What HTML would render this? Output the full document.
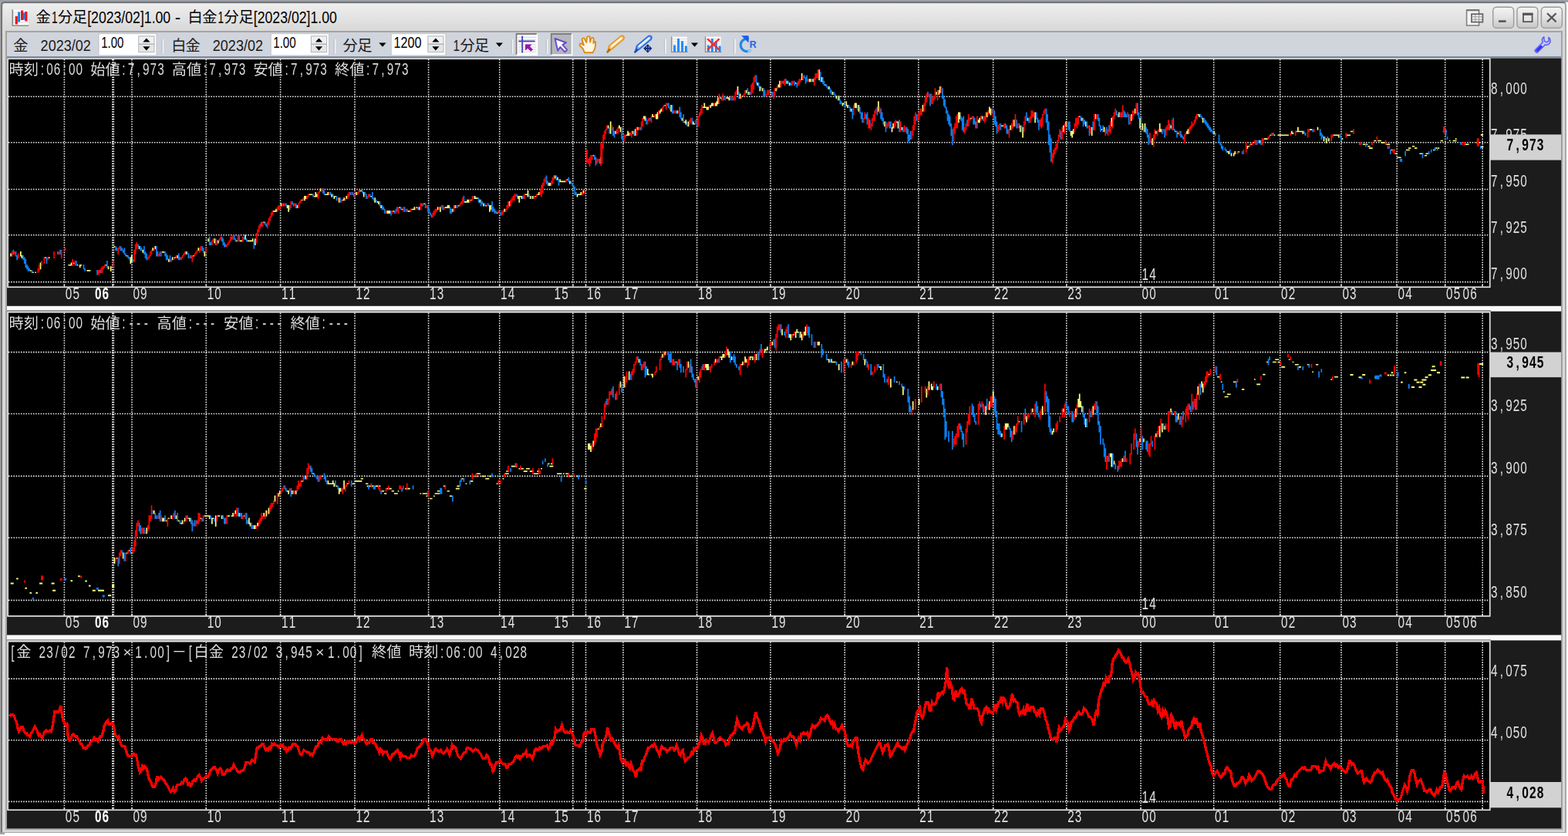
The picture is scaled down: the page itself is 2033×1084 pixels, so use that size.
<!DOCTYPE html>
<html lang="ja"><head><meta charset="utf-8"><title>金1分足[2023/02]1.00 - 白金1分足[2023/02]1.00</title>
<style>
html,body{margin:0;padding:0;background:#fff;}
body{width:2033px;height:1084px;overflow:hidden;position:relative;font-family:"Liberation Sans",sans-serif;}
.abs{position:absolute;}
#shadow{left:0;top:0;width:6px;height:1082px;background:#a8a8a8;}
#topstrip{left:0;top:0;width:2033px;height:3px;background:linear-gradient(#989ea9,#a2a4a8);}
#win{left:1.3px;top:2.4px;width:2025.3px;height:1074.8px;border-style:solid;border-width:2.2px 2.2px 1.8px 2.2px;border-color:#747474 #a8a8a8 #a8a8a8 #747474;border-radius:4.5px 4.5px 0 0;background:#d8d8d8;}
#titlebar{left:3.6px;top:4.8px;width:2025.4px;height:35.4px;border-radius:3px 3px 0 0;background:linear-gradient(#eeeeee,#e4e4e4 45%,#d8d8d8);}
#inner{left:7.2px;top:40.2px;width:2019px;height:1035.8px;background:#a4a4a4;}
#toolbar{left:8.8px;top:41.6px;width:2015.6px;height:31.4px;background:#d0d4dc;}
#tbline{left:8.8px;top:73px;width:2015.6px;height:1.6px;background:#7d8ca4;}
#client{left:8.8px;top:74.6px;width:2015.6px;height:999.8px;background:#fafafa;}
.gapline{left:8.8px;width:1923.8px;height:1.6px;background:#9a9a9a;}
svg{position:absolute;left:0;top:0;}
.cjk{font-family:"Liberation Sans","Noto Sans CJK JP",sans-serif;font-size:19.2px;}
</style></head><body>
<div class="abs" id="shadow"></div>
<div class="abs" id="topstrip"></div>
<div class="abs" id="win"></div>
<div class="abs" id="titlebar"></div>
<div class="abs" id="inner"></div>
<div class="abs" id="toolbar"></div>
<div class="abs" id="tbline"></div>
<div class="abs" id="client"></div>
<div class="abs gapline" style="top:402.2px"></div>
<div class="abs gapline" style="top:828.8px"></div>
<svg width="2033" height="1084" viewBox="0 0 2033 1084">
<defs><linearGradient id="bg" x1="0" y1="0" x2="0" y2="1"><stop offset="0" stop-color="#f4f4f4"/><stop offset="0.5" stop-color="#e2e2e2"/><stop offset="1" stop-color="#c6c6c6"/></linearGradient>
<filter id="soft" x="0" y="0" width="2033" height="1084" filterUnits="userSpaceOnUse"><feGaussianBlur stdDeviation="0.5"/></filter></defs>
<g id="charts" filter="url(#soft)"><rect x="9" y="75.4" width="2015.2" height="321.4" fill="#1a1a1a"/><rect x="9.2" y="75.4" width="1923.4" height="297.7" fill="#e4e4e4"/><rect x="11.0" y="77.0" width="1920.0" height="294.4" fill="#000"/><path d="M11.0 125.3H1931.0M11.0 184.7H1931.0M11.0 245.5H1931.0M11.0 304.8H1931.0M11.0 365.6H1931.0" stroke="#e6e6e6" stroke-width="1.6" stroke-dasharray="1.6 1.6" fill="none"/><path d="M83.4 77.0V371.4M145.8 77.0V371.4M147.4 77.0V371.4M171.0 77.0V371.4M267.3 77.0V371.4M363.6 77.0V371.4M460.0 77.0V371.4M555.6 77.0V371.4M647.7 77.0V371.4M742.8 77.0V371.4M759.5 77.0V371.4M808.0 77.0V371.4M903.6 77.0V371.4M999.0 77.0V371.4M1095.3 77.0V371.4M1190.9 77.0V371.4M1287.7 77.0V371.4M1382.8 77.0V371.4M1479.1 77.0V371.4M1573.7 77.0V371.4M1659.7 77.0V371.4M1739.0 77.0V371.4M1811.2 77.0V371.4M1873.7 77.0V371.4M1922.2 77.0V371.4" stroke="#e6e6e6" stroke-width="1.6" stroke-dasharray="1.6 1.6" fill="none"/><path d="M83.4 369.2v2.4M146.3 369.2v2.4M171.0 369.2v2.4M267.3 369.2v2.4M363.6 369.2v2.4M460.0 369.2v2.4M555.6 369.2v2.4M647.7 369.2v2.4M742.8 369.2v2.4M759.5 369.2v2.4M808.0 369.2v2.4M903.6 369.2v2.4M999.0 369.2v2.4M1095.3 369.2v2.4M1190.9 369.2v2.4M1287.7 369.2v2.4M1382.8 369.2v2.4M1479.1 369.2v2.4M1573.7 369.2v2.4M1659.7 369.2v2.4M1739.0 369.2v2.4M1811.2 369.2v2.4M1873.7 369.2v2.4M1922.2 369.2v2.4" stroke="#e4e4e4" stroke-width="1.6" fill="none"/><rect x="9" y="403.7" width="2015.2" height="419.7" fill="#1a1a1a"/><rect x="9.2" y="403.7" width="1923.4" height="396.0" fill="#e4e4e4"/><rect x="11.0" y="405.6" width="1920.0" height="392.4" fill="#000"/><path d="M11.0 456.6H1931.0M11.0 536.5H1931.0M11.0 617.4H1931.0M11.0 697.3H1931.0M11.0 778.4H1931.0" stroke="#e6e6e6" stroke-width="1.6" stroke-dasharray="1.6 1.6" fill="none"/><path d="M83.4 405.6V798.0M145.8 405.6V798.0M147.4 405.6V798.0M171.0 405.6V798.0M267.3 405.6V798.0M363.6 405.6V798.0M460.0 405.6V798.0M555.6 405.6V798.0M647.7 405.6V798.0M742.8 405.6V798.0M759.5 405.6V798.0M808.0 405.6V798.0M903.6 405.6V798.0M999.0 405.6V798.0M1095.3 405.6V798.0M1190.9 405.6V798.0M1287.7 405.6V798.0M1382.8 405.6V798.0M1479.1 405.6V798.0M1573.7 405.6V798.0M1659.7 405.6V798.0M1739.0 405.6V798.0M1811.2 405.6V798.0M1873.7 405.6V798.0M1922.2 405.6V798.0" stroke="#e6e6e6" stroke-width="1.6" stroke-dasharray="1.6 1.6" fill="none"/><path d="M83.4 795.8v2.4M146.3 795.8v2.4M171.0 795.8v2.4M267.3 795.8v2.4M363.6 795.8v2.4M460.0 795.8v2.4M555.6 795.8v2.4M647.7 795.8v2.4M742.8 795.8v2.4M759.5 795.8v2.4M808.0 795.8v2.4M903.6 795.8v2.4M999.0 795.8v2.4M1095.3 795.8v2.4M1190.9 795.8v2.4M1287.7 795.8v2.4M1382.8 795.8v2.4M1479.1 795.8v2.4M1573.7 795.8v2.4M1659.7 795.8v2.4M1739.0 795.8v2.4M1811.2 795.8v2.4M1873.7 795.8v2.4M1922.2 795.8v2.4" stroke="#e4e4e4" stroke-width="1.6" fill="none"/><rect x="9" y="830.4" width="2015.2" height="243.8" fill="#1a1a1a"/><rect x="9.2" y="830.4" width="1923.4" height="220.7" fill="#e4e4e4"/><rect x="11.0" y="832.5" width="1920.0" height="216.9" fill="#000"/><path d="M11.0 880.1H1931.0M11.0 959.8H1931.0M11.0 1039.4H1931.0" stroke="#e6e6e6" stroke-width="1.6" stroke-dasharray="1.6 1.6" fill="none"/><path d="M83.4 832.5V1049.4M145.8 832.5V1049.4M147.4 832.5V1049.4M171.0 832.5V1049.4M267.3 832.5V1049.4M363.6 832.5V1049.4M460.0 832.5V1049.4M555.6 832.5V1049.4M647.7 832.5V1049.4M742.8 832.5V1049.4M759.5 832.5V1049.4M808.0 832.5V1049.4M903.6 832.5V1049.4M999.0 832.5V1049.4M1095.3 832.5V1049.4M1190.9 832.5V1049.4M1287.7 832.5V1049.4M1382.8 832.5V1049.4M1479.1 832.5V1049.4M1573.7 832.5V1049.4M1659.7 832.5V1049.4M1739.0 832.5V1049.4M1811.2 832.5V1049.4M1873.7 832.5V1049.4M1922.2 832.5V1049.4" stroke="#e6e6e6" stroke-width="1.6" stroke-dasharray="1.6 1.6" fill="none"/><path d="M83.4 1047.2v2.4M146.3 1047.2v2.4M171.0 1047.2v2.4M267.3 1047.2v2.4M363.6 1047.2v2.4M460.0 1047.2v2.4M555.6 1047.2v2.4M647.7 1047.2v2.4M742.8 1047.2v2.4M759.5 1047.2v2.4M808.0 1047.2v2.4M903.6 1047.2v2.4M999.0 1047.2v2.4M1095.3 1047.2v2.4M1190.9 1047.2v2.4M1287.7 1047.2v2.4M1382.8 1047.2v2.4M1479.1 1047.2v2.4M1573.7 1047.2v2.4M1659.7 1047.2v2.4M1739.0 1047.2v2.4M1811.2 1047.2v2.4M1873.7 1047.2v2.4M1922.2 1047.2v2.4" stroke="#e4e4e4" stroke-width="1.6" fill="none"/><path d="M14.1 328.5v4.0M26.9 326.1v6.4M28.5 330.9v4.0M39.7 350.1v1.6M42.9 352.5v1.6M46.1 352.5v1.6M52.5 340.5v8.8M58.9 333.3v1.6M63.7 333.3v1.6M89.3 342.9v1.6M90.9 342.9v1.6M92.5 340.5v4.0M95.7 340.5v1.6M100.5 342.9v1.6M103.7 342.9v4.0M105.3 342.9v1.6M113.3 350.1v1.6M114.9 350.1v1.6M116.5 350.1v1.6M137.3 342.9v1.6M140.5 345.3v4.0M143.7 345.3v6.4M148.5 318.9v1.6M164.5 330.9v1.6M169.3 333.3v8.8M170.9 330.9v8.8M180.5 318.9v4.0M185.3 323.7v4.0M198.1 321.3v4.0M201.3 318.9v4.0M210.9 326.1v1.6M212.5 326.1v1.6M218.9 335.7v4.0M223.7 333.3v4.0M226.9 333.3v1.6M230.1 330.9v4.0M241.3 326.1v4.0M250.9 330.9v1.6M257.3 321.3v4.0M265.3 326.1v6.4M270.1 309.2v4.0M278.1 309.2v6.4M282.9 311.6v4.0M306.9 311.6v1.6M311.7 311.6v1.6M313.3 311.6v1.6M318.1 304.4v6.4M321.3 311.6v1.6M322.9 311.6v1.6M324.5 311.6v1.6M326.1 311.6v1.6M327.7 309.2v4.0M330.9 309.2v8.8M342.1 287.6v1.6M354.9 273.1v1.6M356.5 273.1v1.6M358.1 270.7v4.0M364.5 263.5v4.0M372.5 265.9v4.0M374.1 265.9v8.8M385.3 265.9v4.0M391.7 258.7v1.6M394.9 253.9v6.4M396.5 253.9v4.0M401.3 251.5v1.6M402.9 251.5v1.6M404.5 251.5v1.6M407.7 253.9v1.6M409.3 249.1v6.4M410.9 251.5v4.0M415.7 244.3v4.0M422.1 251.5v1.6M423.7 251.5v1.6M425.3 249.1v4.0M430.1 251.5v4.0M433.3 253.9v4.0M434.9 253.9v1.6M439.7 256.3v6.4M444.5 258.7v1.6M446.1 256.3v4.0M449.3 253.9v4.0M462.1 249.1v4.0M466.9 246.7v1.6M468.5 246.7v1.6M471.7 249.1v6.4M481.3 253.9v1.6M486.1 256.3v6.4M489.3 261.1v1.6M490.9 261.1v4.0M494.1 265.9v4.0M502.1 273.1v4.0M503.7 273.1v4.0M505.3 273.1v4.0M510.1 273.1v1.6M518.1 268.3v1.6M521.3 270.7v1.6M529.3 273.1v1.6M530.9 273.1v1.6M534.1 270.7v1.6M535.7 270.7v1.6M537.3 268.3v4.0M540.5 268.3v1.6M543.7 268.3v4.0M550.1 263.5v1.6M567.7 268.3v4.0M570.9 268.3v6.4M577.3 268.3v1.6M578.9 268.3v1.6M580.5 265.9v4.0M582.1 265.9v4.0M586.9 270.7v4.0M590.1 265.9v4.0M594.9 265.9v1.6M602.9 261.1v1.6M604.5 261.1v1.6M606.1 258.7v4.0M607.7 258.7v4.0M610.9 258.7v1.6M615.7 253.9v4.0M617.3 256.3v1.6M618.9 256.3v1.6M622.1 258.7v4.0M626.9 263.5v4.0M630.1 265.9v1.6M634.9 265.9v8.8M636.5 265.9v6.4M644.5 275.5v1.6M654.1 270.7v4.0M660.5 261.1v6.4M671.7 253.9v4.0M673.3 253.9v8.8M674.9 253.9v1.6M676.5 253.9v4.0M681.3 251.5v1.6M682.9 251.5v1.6M684.5 246.7v8.8M687.7 253.9v4.0M690.9 253.9v4.0M694.1 253.9v1.6M697.3 251.5v1.6M698.9 249.1v4.0M711.7 237.0v4.0M713.3 237.0v4.0M719.7 227.4v4.0M722.9 229.8v4.0M726.1 232.2v4.0M727.7 234.6v1.6M729.3 234.6v1.6M730.9 234.6v1.6M732.5 234.6v1.6M735.7 232.2v1.6M738.9 234.6v4.0M748.5 251.5v4.0M750.1 251.5v1.6M751.7 251.5v1.6M753.3 249.1v4.0M756.5 246.7v4.0M761.3 208.2v1.6M769.3 200.9v1.6M778.9 203.4v8.8M788.5 162.4v4.0M791.7 157.6v16.0M798.1 169.7v4.0M802.9 162.4v4.0M804.5 164.8v6.4M812.5 174.5v1.6M814.1 169.7v6.4M815.7 172.1v4.0M820.5 169.7v4.0M823.7 167.3v8.8M826.9 164.8v4.0M834.9 150.4v4.0M836.5 150.4v6.4M846.1 148.0v4.0M847.7 150.4v1.6M850.9 148.0v6.4M852.5 145.6v8.8M855.7 143.2v4.0M857.3 140.8v4.0M862.1 136.0v1.6M870.1 136.0v8.8M878.1 143.2v4.0M884.5 152.8v4.0M887.7 157.6v1.6M889.3 155.2v6.4M892.5 157.6v6.4M898.9 157.6v4.0M900.5 160.0v1.6M911.7 138.4v1.6M913.3 133.6v6.4M914.9 138.4v1.6M916.5 138.4v4.0M918.1 138.4v4.0M921.3 136.0v4.0M922.9 133.6v4.0M924.5 133.6v4.0M927.7 133.6v4.0M929.3 131.2v6.4M930.9 126.3v8.8M934.1 126.3v1.6M942.1 126.3v1.6M943.7 126.3v1.6M945.3 126.3v4.0M956.5 111.9v11.2M959.7 121.5v6.4M962.9 123.9v1.6M967.7 116.7v4.0M970.9 119.1v4.0M982.1 107.1v4.0M985.3 111.9v6.4M988.5 114.3v4.0M999.7 119.1v1.6M1006.1 114.3v4.0M1009.3 109.5v4.0M1010.9 104.7v8.8M1020.5 104.7v4.0M1023.7 107.1v4.0M1031.7 107.1v1.6M1039.7 95.1v8.8M1049.3 102.3v4.0M1050.9 102.3v4.0M1054.1 102.3v4.0M1062.1 90.3v13.6M1065.3 99.9v6.4M1070.1 109.5v1.6M1074.9 111.9v4.0M1079.7 119.1v4.0M1084.5 123.9v4.0M1087.7 123.9v6.4M1092.5 133.6v4.0M1094.1 133.6v1.6M1097.3 131.2v6.4M1098.9 136.0v4.0M1103.7 140.8v4.0M1108.5 133.6v6.4M1110.1 133.6v6.4M1113.3 136.0v8.8M1138.9 131.2v13.6M1146.9 157.6v6.4M1156.5 164.8v6.4M1158.1 160.0v6.4M1162.9 157.6v1.6M1164.5 157.6v8.8M1169.3 164.8v4.0M1196.5 136.0v8.8M1214.1 119.1v4.0M1217.3 116.7v6.4M1218.9 111.9v8.8M1242.9 145.6v13.6M1244.5 145.6v8.8M1258.9 152.8v1.6M1268.5 155.2v4.0M1270.1 152.8v6.4M1273.3 150.4v4.0M1279.7 145.6v6.4M1282.9 138.4v8.8M1284.5 140.8v8.8M1298.9 162.4v1.6M1300.5 162.4v1.6M1310.1 162.4v6.4M1314.9 155.2v8.8M1322.9 162.4v8.8M1326.1 164.8v13.6M1332.5 152.8v4.0M1342.1 145.6v13.6M1378.9 162.4v8.8M1382.1 157.6v6.4M1388.5 169.7v6.4M1390.1 169.7v8.8M1391.7 167.3v6.4M1399.7 150.4v1.6M1402.9 152.8v4.0M1407.7 157.6v6.4M1415.7 164.8v11.2M1420.5 148.0v6.4M1428.5 167.3v1.6M1431.7 164.8v6.4M1441.3 152.8v11.2M1450.9 145.6v6.4M1466.9 148.0v8.8M1471.7 140.8v6.4M1478.1 152.8v13.6M1481.3 160.0v8.8M1484.5 160.0v11.2M1494.1 179.3v8.8M1498.9 169.7v4.0M1503.7 160.0v11.2M1505.3 167.3v4.0M1518.1 162.4v4.0M1524.5 169.7v1.6M1527.7 172.1v1.6M1538.9 169.7v4.0M1540.5 167.3v6.4M1553.3 148.0v1.6M1554.9 148.0v4.0M1559.7 152.8v6.4M1574.1 169.7v4.0M1591.7 196.1v1.6M1593.3 196.1v4.0M1596.5 198.5v4.0M1599.7 198.5v4.0M1601.3 196.1v4.0M1606.1 196.1v1.6M1617.3 188.9v4.0M1618.9 188.9v1.6M1622.1 186.5v1.6M1625.3 184.1v1.6M1633.3 181.7v4.0M1639.7 179.3v1.6M1641.3 179.3v1.6M1642.9 179.3v1.6M1647.7 174.5v1.6M1652.5 174.5v1.6M1657.3 174.5v1.6M1658.9 174.5v1.6M1660.5 174.5v1.6M1662.1 174.5v1.6M1663.7 174.5v1.6M1665.3 174.5v1.6M1666.9 174.5v1.6M1668.5 174.5v1.6M1670.1 174.5v1.6M1674.9 169.7v4.0M1676.5 172.1v1.6M1681.3 169.7v1.6M1682.9 164.8v6.4M1684.5 169.7v1.6M1686.1 169.7v1.6M1687.7 169.7v1.6M1689.3 169.7v4.0M1698.9 167.3v1.6M1700.5 167.3v1.6M1708.5 164.8v4.0M1716.5 176.9v6.4M1719.7 179.3v6.4M1722.9 179.3v4.0M1729.3 174.5v1.6M1730.9 174.5v1.6M1732.5 174.5v1.6M1734.1 174.5v1.6M1735.7 174.5v4.0M1740.5 179.3v1.6M1746.9 174.5v1.6M1748.5 174.5v1.6M1750.1 174.5v1.6M1751.7 169.7v1.6M1753.3 169.7v1.6M1753.3 169.7v1.6M1754.9 169.7v1.6M1767.7 186.5v1.6M1769.3 186.5v1.6M1769.3 186.5v1.6M1770.9 186.5v1.6M1772.5 186.5v1.6M1774.1 188.9v1.6M1775.7 188.9v1.6M1775.7 191.3v1.6M1777.3 191.3v1.6M1778.9 191.3v1.6M1782.1 181.7v1.6M1783.7 181.7v1.6M1786.9 181.7v1.6M1788.5 181.7v1.6M1790.1 181.7v1.6M1788.5 181.7v1.6M1791.7 184.1v1.6M1793.3 184.1v1.6M1794.9 184.1v1.6M1798.1 186.5v1.6M1799.7 186.5v1.6M1801.3 186.5v1.6M1804.5 193.7v1.6M1806.1 193.7v1.6M1807.7 193.7v1.6M1809.3 198.5v1.6M1810.9 198.5v1.6M1812.5 203.4v1.6M1814.1 203.4v1.6M1815.7 203.4v1.6M1823.7 193.7v1.6M1825.3 193.7v1.6M1826.9 193.7v1.6M1825.3 193.7v1.6M1826.9 193.7v1.6M1826.9 191.3v1.6M1828.5 191.3v1.6M1831.7 188.9v1.6M1833.3 188.9v1.6M1834.9 191.3v1.6M1836.5 191.3v1.6M1841.3 198.5v1.6M1842.9 198.5v1.6M1844.5 198.5v1.6M1842.9 198.5v1.6M1847.7 200.9v1.6M1849.3 200.9v1.6M1849.3 198.5v1.6M1850.9 198.5v1.6M1852.5 198.5v1.6M1858.9 193.7v1.6M1860.5 193.7v1.6M1862.1 191.3v1.6M1863.7 191.3v1.6M1865.3 191.3v1.6M1868.5 181.7v1.6M1870.1 181.7v1.6M1871.7 169.7v1.6M1873.3 169.7v1.6M1874.9 169.7v1.6M1879.7 181.7v1.6M1884.5 181.7v1.6M1886.1 181.7v1.6M1887.7 181.7v1.6M1887.7 179.3v1.6M1900.5 186.5v1.6M1902.1 186.5v1.6M1902.1 186.5v1.6M1903.7 186.5v1.6M1914.9 184.1v1.6M1916.5 184.1v1.6M1918.1 184.1v1.6M1916.5 184.1v1.6M1918.1 184.1v1.6" stroke="#ffff80" stroke-width="1.7" fill="none"/><path d="M17.3 323.7v6.4M20.5 326.1v6.4M22.1 330.9v6.4M30.1 330.9v6.4M31.7 333.3v8.8M33.3 335.7v11.2M34.9 342.9v6.4M36.5 345.3v6.4M38.1 347.7v4.0M41.3 350.1v4.0M60.5 333.3v8.8M74.9 326.1v4.0M78.1 323.7v6.4M98.9 338.1v6.4M108.5 342.9v6.4M110.1 347.7v4.0M126.1 350.1v6.4M129.3 350.1v4.0M138.9 338.1v8.8M150.1 318.9v6.4M151.7 321.3v4.0M156.5 318.9v6.4M158.1 321.3v4.0M159.7 323.7v4.0M161.3 321.3v8.8M162.9 328.5v4.0M166.1 330.9v4.0M167.7 333.3v4.0M172.5 335.7v4.0M178.9 316.5v4.0M182.1 318.9v6.4M183.7 321.3v4.0M186.9 318.9v11.2M188.5 326.1v8.8M190.1 328.5v8.8M202.9 318.9v13.6M204.5 326.1v6.4M207.7 326.1v6.4M214.1 326.1v6.4M215.7 328.5v8.8M217.3 330.9v6.4M220.5 330.9v8.8M231.7 328.5v8.8M233.3 333.3v4.0M242.9 326.1v4.0M244.5 328.5v6.4M247.7 330.9v4.0M262.1 318.9v6.4M263.7 321.3v6.4M271.7 306.8v11.2M273.3 314.0v4.0M279.7 309.2v8.8M287.7 306.8v6.4M289.3 309.2v8.8M290.9 314.0v6.4M292.5 316.5v4.0M300.5 306.8v4.0M303.7 304.4v6.4M305.3 309.2v4.0M310.1 304.4v8.8M316.5 306.8v4.0M319.7 309.2v4.0M329.3 311.6v11.2M338.9 287.6v6.4M343.7 287.6v4.0M345.3 290.0v4.0M367.7 263.5v4.0M370.9 263.5v4.0M375.7 265.9v6.4M378.9 261.1v4.0M380.5 263.5v4.0M383.7 263.5v6.4M406.1 251.5v4.0M418.9 244.3v6.4M420.5 246.7v6.4M428.5 249.1v4.0M431.7 251.5v4.0M436.5 253.9v6.4M441.3 256.3v6.4M454.1 249.1v4.0M457.3 249.1v4.0M458.9 251.5v4.0M470.1 246.7v4.0M473.3 249.1v4.0M474.9 251.5v6.4M479.7 251.5v4.0M482.9 249.1v8.8M484.5 256.3v4.0M487.7 258.7v4.0M492.5 261.1v6.4M495.7 265.9v6.4M497.3 268.3v4.0M498.9 270.7v6.4M506.9 273.1v6.4M511.7 273.1v4.0M514.9 268.3v6.4M519.7 268.3v4.0M524.5 268.3v6.4M527.7 270.7v4.0M542.1 268.3v4.0M546.9 263.5v4.0M551.7 263.5v6.4M554.9 265.9v8.8M556.5 270.7v6.4M558.1 275.5v4.0M559.7 277.9v4.0M574.1 265.9v6.4M583.7 268.3v8.8M585.3 270.7v6.4M591.7 265.9v4.0M601.3 253.9v8.8M614.1 253.9v4.0M620.5 256.3v6.4M623.7 258.7v8.8M625.3 261.1v4.0M628.5 263.5v4.0M633.3 263.5v4.0M638.1 261.1v13.6M639.7 268.3v6.4M641.3 270.7v6.4M642.9 273.1v4.0M647.7 273.1v4.0M649.3 275.5v4.0M670.1 251.5v4.0M678.1 253.9v4.0M686.1 251.5v4.0M689.3 253.9v4.0M708.5 227.4v11.2M710.1 234.6v6.4M721.3 227.4v6.4M724.5 232.2v8.8M737.3 229.8v6.4M740.5 234.6v4.0M742.1 237.0v4.0M743.7 239.4v6.4M745.3 241.9v11.2M746.9 249.1v4.0M764.5 205.8v8.8M770.9 200.9v6.4M772.5 203.4v11.2M777.3 205.8v6.4M790.1 164.8v8.8M794.9 164.8v11.2M796.5 169.7v8.8M806.1 164.8v16.0M807.7 176.9v6.4M822.1 169.7v6.4M830.1 164.8v4.0M838.1 152.8v8.8M842.9 152.8v4.0M865.3 133.6v4.0M866.9 133.6v6.4M868.5 138.4v4.0M871.7 136.0v11.2M873.3 143.2v4.0M876.5 143.2v4.0M881.3 138.4v13.6M882.9 145.6v8.8M886.1 148.0v11.2M890.9 157.6v6.4M897.3 152.8v8.8M903.7 155.2v8.8M935.7 126.3v4.0M938.9 123.9v6.4M946.9 126.3v4.0M950.1 126.3v4.0M958.1 119.1v8.8M969.3 114.3v8.8M972.5 119.1v4.0M980.5 97.5v11.2M983.7 107.1v6.4M986.9 111.9v4.0M990.1 114.3v11.2M991.7 116.7v8.8M998.1 116.7v4.0M1001.3 119.1v6.4M1015.7 104.7v4.0M1018.9 102.3v6.4M1022.1 104.7v4.0M1025.3 107.1v4.0M1030.1 104.7v6.4M1033.3 107.1v6.4M1042.9 97.5v4.0M1044.5 99.9v8.8M1046.1 97.5v8.8M1052.5 102.3v4.0M1063.7 92.7v13.6M1066.9 99.9v8.8M1068.5 104.7v6.4M1071.7 109.5v4.0M1073.3 111.9v4.0M1076.5 114.3v6.4M1078.1 116.7v6.4M1081.3 119.1v4.0M1082.9 121.5v4.0M1086.1 123.9v6.4M1089.3 128.8v6.4M1090.9 131.2v4.0M1095.7 133.6v6.4M1100.5 136.0v4.0M1102.1 138.4v6.4M1105.3 140.8v13.6M1111.7 136.0v6.4M1114.9 138.4v8.8M1116.5 145.6v8.8M1118.1 145.6v13.6M1122.9 148.0v6.4M1124.5 145.6v16.0M1127.7 155.2v11.2M1137.3 138.4v11.2M1142.1 140.8v13.6M1143.7 145.6v11.2M1145.3 152.8v8.8M1148.5 157.6v13.6M1153.3 157.6v8.8M1154.9 157.6v8.8M1166.1 155.2v16.0M1170.9 164.8v6.4M1175.7 164.8v8.8M1177.3 167.3v18.4M1178.9 174.5v8.8M1180.5 169.7v11.2M1188.5 148.0v8.8M1202.9 119.1v6.4M1206.1 121.5v16.0M1222.1 114.3v13.6M1223.7 123.9v13.6M1225.3 128.8v11.2M1226.9 138.4v8.8M1228.5 143.2v13.6M1230.1 148.0v13.6M1231.7 150.4v13.6M1233.3 160.0v16.0M1234.9 167.3v20.9M1246.1 150.4v6.4M1247.7 152.8v16.0M1249.3 150.4v20.9M1254.1 155.2v8.8M1262.1 150.4v11.2M1263.7 152.8v8.8M1265.3 157.6v8.8M1274.9 150.4v6.4M1286.1 140.8v6.4M1289.3 143.2v18.4M1290.9 150.4v13.6M1292.5 157.6v16.0M1297.3 160.0v8.8M1303.7 160.0v6.4M1305.3 162.4v11.2M1306.9 167.3v6.4M1318.1 155.2v11.2M1321.3 160.0v6.4M1324.5 162.4v8.8M1330.9 145.6v11.2M1334.1 152.8v6.4M1343.7 145.6v8.8M1345.3 152.8v6.4M1346.9 155.2v13.6M1356.5 140.8v18.4M1358.1 148.0v20.9M1359.7 157.6v30.5M1361.3 174.5v23.3M1362.9 179.3v30.5M1375.7 169.7v11.2M1385.3 157.6v11.2M1386.9 157.6v13.6M1401.3 150.4v6.4M1404.5 152.8v11.2M1406.1 155.2v6.4M1409.3 157.6v8.8M1412.5 162.4v13.6M1417.3 157.6v11.2M1423.7 148.0v8.8M1425.3 152.8v11.2M1426.9 162.4v8.8M1430.1 162.4v8.8M1434.9 164.8v8.8M1438.1 162.4v8.8M1447.7 143.2v6.4M1449.3 148.0v4.0M1454.1 145.6v6.4M1457.3 143.2v8.8M1458.9 145.6v6.4M1460.5 148.0v4.0M1463.7 148.0v13.6M1474.9 133.6v16.0M1476.5 145.6v8.8M1479.7 150.4v13.6M1482.9 162.4v8.8M1486.1 164.8v8.8M1487.7 167.3v11.2M1489.3 174.5v13.6M1492.5 181.7v4.0M1506.9 167.3v6.4M1510.1 167.3v11.2M1516.5 160.0v8.8M1521.3 152.8v16.0M1522.9 167.3v4.0M1526.1 169.7v8.8M1530.9 169.7v8.8M1532.5 174.5v4.0M1534.1 176.9v4.0M1556.5 148.0v4.0M1558.1 150.4v4.0M1561.3 152.8v6.4M1562.9 155.2v6.4M1564.5 157.6v6.4M1566.1 160.0v6.4M1567.7 162.4v6.4M1569.3 164.8v6.4M1570.9 167.3v4.0M1572.5 169.7v4.0M1575.7 172.1v4.0M1580.5 174.5v11.2M1582.1 184.1v4.0M1583.7 186.5v6.4M1585.3 188.9v6.4M1588.5 191.3v4.0M1590.1 193.7v4.0M1594.9 193.7v6.4M1610.9 196.1v4.0M1628.5 181.7v6.4M1631.7 181.7v4.0M1634.9 181.7v6.4M1650.9 172.1v4.0M1690.9 169.7v4.0M1692.5 172.1v4.0M1702.1 167.3v4.0M1711.7 167.3v8.8M1713.3 172.1v8.8M1714.9 174.5v4.0M1718.1 176.9v4.0M1721.3 176.9v6.4M1737.3 174.5v4.0M1738.9 176.9v6.4M1762.9 184.1v4.0M1770.9 186.5v4.0M1799.7 188.9v4.0M1802.9 193.7v6.4M1815.7 205.8v4.0M1817.3 205.8v4.0M1822.1 196.1v6.4M1844.5 198.5v6.4M1852.5 196.1v4.0M1855.7 193.7v4.0M1860.5 191.3v4.0M1863.7 191.3v4.0M1876.5 176.9v4.0M1894.1 184.1v4.0M1919.7 188.9v4.0" stroke="#0a7ff0" stroke-width="1.7" fill="none"/><path d="M15.7 326.1v6.4M18.9 326.1v4.0M23.7 328.5v6.4M49.3 347.7v6.4M50.9 342.9v8.8M54.1 338.1v6.4M57.3 333.3v8.8M62.1 333.3v4.0M70.1 326.1v8.8M76.5 326.1v4.0M79.7 323.7v11.2M84.5 321.3v4.0M94.1 335.7v8.8M97.3 338.1v6.4M127.7 350.1v6.4M130.9 347.7v6.4M132.5 345.3v8.8M134.1 345.3v4.0M135.7 342.9v4.0M146.9 338.1v8.8M153.3 321.3v8.8M154.9 318.9v4.0M174.1 323.7v16.0M175.7 316.5v13.6M177.3 314.0v8.8M191.7 333.3v4.0M193.3 330.9v4.0M194.9 326.1v6.4M196.5 323.7v6.4M199.7 321.3v4.0M206.1 328.5v4.0M209.3 326.1v6.4M222.1 335.7v4.0M225.3 333.3v4.0M228.5 330.9v4.0M234.9 333.3v4.0M236.5 330.9v4.0M238.1 328.5v4.0M239.7 326.1v4.0M246.1 330.9v4.0M249.3 330.9v8.8M252.5 328.5v4.0M254.1 326.1v4.0M255.7 323.7v4.0M258.9 321.3v6.4M260.5 318.9v6.4M266.9 321.3v6.4M274.9 311.6v6.4M276.5 309.2v4.0M281.3 311.6v6.4M284.5 309.2v4.0M286.1 306.8v4.0M294.1 316.5v4.0M295.7 314.0v4.0M297.3 311.6v4.0M298.9 306.8v6.4M302.1 304.4v6.4M308.5 304.4v8.8M314.9 306.8v6.4M332.5 302.0v13.6M334.1 297.2v8.8M335.7 292.4v8.8M337.3 290.0v6.4M340.5 287.6v6.4M346.9 287.6v8.8M348.5 282.8v8.8M350.1 280.4v6.4M351.7 275.5v6.4M353.3 273.1v6.4M359.7 268.3v6.4M361.3 265.9v6.4M362.9 265.9v6.4M366.1 263.5v4.0M369.3 263.5v4.0M377.3 261.1v8.8M382.1 263.5v4.0M386.9 263.5v6.4M388.5 261.1v4.0M390.1 258.7v4.0M393.3 256.3v4.0M398.1 253.9v4.0M399.7 251.5v4.0M412.5 249.1v8.8M414.1 246.7v4.0M417.3 244.3v4.0M426.9 249.1v4.0M438.1 256.3v4.0M442.9 258.7v4.0M447.7 256.3v4.0M450.9 251.5v6.4M452.5 249.1v6.4M455.7 249.1v4.0M460.5 251.5v4.0M463.7 249.1v4.0M465.3 246.7v4.0M476.5 253.9v4.0M478.1 251.5v4.0M500.5 273.1v4.0M508.5 273.1v4.0M513.3 270.7v6.4M516.5 268.3v8.8M522.9 268.3v6.4M526.1 270.7v4.0M532.5 270.7v4.0M538.9 268.3v4.0M545.3 263.5v8.8M548.5 263.5v4.0M553.3 265.9v4.0M561.3 275.5v6.4M562.9 273.1v6.4M564.5 270.7v6.4M566.1 270.7v4.0M569.3 268.3v4.0M572.5 265.9v4.0M575.7 268.3v4.0M588.5 265.9v8.8M593.3 265.9v4.0M596.5 263.5v4.0M598.1 261.1v4.0M599.7 256.3v8.8M609.3 258.7v4.0M612.5 253.9v6.4M631.7 263.5v4.0M646.1 273.1v4.0M650.9 273.1v6.4M652.5 273.1v4.0M655.7 270.7v4.0M657.3 265.9v6.4M658.9 261.1v8.8M662.1 258.7v8.8M663.7 256.3v6.4M665.3 253.9v6.4M666.9 251.5v8.8M668.5 251.5v4.0M679.7 251.5v6.4M692.5 253.9v4.0M695.7 251.5v4.0M700.5 246.7v6.4M702.1 239.4v16.0M703.7 237.0v13.6M705.3 232.2v8.8M706.9 229.8v6.4M714.9 234.6v6.4M716.5 229.8v8.8M718.1 227.4v6.4M734.1 232.2v4.0M754.9 249.1v4.0M758.1 246.7v4.0M762.9 205.8v6.4M766.1 200.9v11.2M767.7 200.9v6.4M774.1 205.8v6.4M775.7 205.8v4.0M780.5 186.5v25.7M782.1 174.5v18.4M783.7 169.7v11.2M785.3 167.3v6.4M786.9 162.4v6.4M793.3 162.4v6.4M799.7 167.3v6.4M801.3 164.8v8.8M809.3 174.5v8.8M810.9 174.5v4.0M817.3 172.1v4.0M818.9 169.7v8.8M825.3 164.8v11.2M828.5 164.8v4.0M831.7 157.6v11.2M833.3 152.8v11.2M839.7 155.2v6.4M841.3 152.8v4.0M844.5 150.4v8.8M849.3 148.0v4.0M854.1 143.2v6.4M858.9 138.4v6.4M860.5 136.0v4.0M863.7 133.6v8.8M874.9 143.2v4.0M879.7 143.2v4.0M894.1 155.2v6.4M895.7 152.8v6.4M902.1 155.2v6.4M905.3 150.4v13.6M906.9 145.6v6.4M908.5 140.8v8.8M910.1 136.0v11.2M919.7 136.0v4.0M926.1 133.6v4.0M932.5 121.5v13.6M937.3 121.5v8.8M940.5 126.3v4.0M948.5 123.9v6.4M951.7 123.9v6.4M953.3 119.1v11.2M954.9 116.7v6.4M961.3 123.9v4.0M964.5 121.5v4.0M966.1 116.7v6.4M974.1 109.5v13.6M975.7 107.1v13.6M977.3 99.9v16.0M978.9 97.5v8.8M993.3 121.5v4.0M994.9 116.7v6.4M996.5 116.7v6.4M1002.9 119.1v8.8M1004.5 114.3v11.2M1007.7 111.9v4.0M1012.5 104.7v8.8M1014.1 104.7v4.0M1017.3 102.3v8.8M1026.9 104.7v6.4M1028.5 104.7v4.0M1034.9 104.7v6.4M1036.5 102.3v6.4M1038.1 102.3v4.0M1041.3 97.5v6.4M1047.7 102.3v4.0M1055.7 99.9v11.2M1057.3 95.1v8.8M1058.9 95.1v6.4M1060.5 90.3v11.2M1106.9 136.0v13.6M1119.7 152.8v6.4M1121.3 145.6v8.8M1126.1 152.8v13.6M1129.3 160.0v8.8M1130.9 152.8v11.2M1132.5 148.0v8.8M1134.1 143.2v13.6M1135.7 140.8v6.4M1140.5 138.4v8.8M1150.1 160.0v6.4M1151.7 157.6v6.4M1159.7 157.6v8.8M1161.3 155.2v8.8M1167.7 157.6v13.6M1172.5 162.4v8.8M1174.1 164.8v6.4M1182.1 169.7v11.2M1183.7 162.4v13.6M1185.3 150.4v18.4M1186.9 145.6v16.0M1190.1 148.0v8.8M1191.7 145.6v8.8M1193.3 140.8v8.8M1194.9 140.8v8.8M1198.1 133.6v11.2M1199.7 126.3v11.2M1201.3 121.5v11.2M1204.5 121.5v4.0M1207.7 121.5v13.6M1209.3 126.3v8.8M1210.9 123.9v6.4M1212.5 114.3v13.6M1215.7 116.7v13.6M1220.5 111.9v8.8M1236.5 164.8v18.4M1238.1 160.0v13.6M1239.7 150.4v16.0M1241.3 148.0v18.4M1250.9 164.8v8.8M1252.5 160.0v8.8M1255.7 148.0v16.0M1257.3 152.8v4.0M1260.5 150.4v4.0M1266.9 150.4v16.0M1271.7 150.4v6.4M1276.5 150.4v8.8M1278.1 145.6v11.2M1281.3 143.2v6.4M1287.7 140.8v11.2M1294.1 162.4v8.8M1295.7 160.0v8.8M1302.1 160.0v6.4M1308.5 167.3v11.2M1311.7 160.0v8.8M1313.3 155.2v11.2M1316.5 148.0v16.0M1319.7 160.0v6.4M1327.7 157.6v13.6M1329.3 150.4v11.2M1335.7 150.4v8.8M1337.3 143.2v11.2M1338.9 143.2v8.8M1340.5 145.6v6.4M1348.5 155.2v8.8M1350.1 152.8v13.6M1351.7 148.0v16.0M1353.3 143.2v6.4M1354.9 140.8v6.4M1364.5 198.5v13.6M1366.1 193.7v11.2M1367.7 191.3v8.8M1369.3 186.5v8.8M1370.9 181.7v11.2M1372.5 174.5v8.8M1374.1 167.3v11.2M1377.3 164.8v16.0M1380.5 160.0v13.6M1383.7 157.6v6.4M1393.3 160.0v11.2M1394.9 152.8v11.2M1396.5 152.8v13.6M1398.1 150.4v11.2M1410.9 162.4v4.0M1414.1 164.8v8.8M1418.9 148.0v20.9M1422.1 148.0v6.4M1433.3 167.3v8.8M1436.5 167.3v8.8M1439.7 157.6v16.0M1442.9 150.4v16.0M1444.5 145.6v8.8M1446.1 140.8v8.8M1452.5 145.6v6.4M1455.7 136.0v16.0M1462.1 145.6v6.4M1465.3 150.4v11.2M1468.5 143.2v11.2M1470.1 143.2v6.4M1473.3 133.6v13.6M1490.9 172.1v13.6M1495.7 174.5v16.0M1497.3 167.3v13.6M1500.5 169.7v6.4M1502.1 167.3v4.0M1508.5 167.3v4.0M1511.7 164.8v11.2M1513.3 162.4v6.4M1514.9 155.2v13.6M1519.7 155.2v13.6M1529.3 169.7v6.4M1535.7 174.5v11.2M1537.3 172.1v4.0M1542.1 164.8v8.8M1543.7 162.4v6.4M1545.3 157.6v8.8M1546.9 160.0v4.0M1548.5 155.2v6.4M1550.1 150.4v8.8M1551.7 148.0v6.4M1604.5 196.1v4.0M1612.5 193.7v6.4M1615.7 184.1v13.6M1620.5 186.5v4.0M1623.7 184.1v4.0M1626.9 181.7v4.0M1630.1 181.7v6.4M1636.5 179.3v8.8M1638.1 179.3v4.0M1644.5 176.9v4.0M1646.1 174.5v4.0M1649.3 172.1v4.0M1673.3 172.1v4.0M1679.7 169.7v6.4M1695.7 167.3v11.2M1697.3 167.3v4.0M1703.7 167.3v4.0M1726.1 174.5v8.8M1727.7 174.5v4.0M1745.3 172.1v6.4M1754.9 167.3v6.4M1764.5 184.1v4.0M1778.9 184.1v4.0M1785.3 176.9v4.0M1796.5 181.7v6.4M1801.3 188.9v4.0M1806.1 193.7v4.0M1807.7 193.7v6.4M1895.7 184.1v4.0M1898.9 184.1v4.0" stroke="#ff0000" stroke-width="1.7" fill="none"/><rect x="1871.1" y="164.0" width="2.4" height="8.4" fill="#ff0000"/><rect x="1873.7" y="168.0" width="1.8" height="8.0" fill="#0a7ff0"/><rect x="1914.7" y="179.3" width="3.0" height="10.4" fill="#ff0000"/><rect x="1919.9" y="173.9" width="3.0" height="2.0" fill="#ffff80"/><rect x="1920.3" y="189.6" width="3.0" height="2.0" fill="#ffff80"/><rect x="759.9" y="194.0" width="2.0" height="17.0" fill="#ff0000"/><rect x="763.5" y="204.0" width="1.8" height="12.0" fill="#ff0000"/><rect x="778.3" y="185.0" width="1.8" height="30.0" fill="#ff0000"/><path d="M148.5 722.9v8.0M151.7 722.9v1.6M159.7 716.5v8.0M164.5 716.5v1.6M167.7 713.2v1.6M170.9 716.5v1.6M190.1 684.3v8.0M199.7 661.8v4.8M210.9 671.4v4.8M212.5 671.4v4.8M215.7 674.6v1.6M218.9 671.4v1.6M222.1 668.2v4.8M228.5 668.2v4.8M231.7 674.6v1.6M234.9 677.8v1.6M236.5 674.6v4.8M239.7 671.4v4.8M244.5 671.4v1.6M246.1 671.4v4.8M260.5 671.4v1.6M265.3 668.2v1.6M266.9 668.2v1.6M268.5 668.2v1.6M270.1 668.2v1.6M271.7 668.2v4.8M274.9 671.4v8.0M276.5 671.4v1.6M279.7 668.2v14.5M282.9 668.2v1.6M284.5 668.2v1.6M287.7 668.2v4.8M295.7 668.2v1.6M297.3 668.2v1.6M300.5 668.2v1.6M302.1 665.0v4.8M305.3 661.8v4.8M310.1 665.0v4.8M316.5 668.2v1.6M322.9 671.4v8.0M324.5 677.8v4.8M329.3 681.1v4.8M330.9 681.1v4.8M334.1 677.8v4.8M342.1 665.0v4.8M345.3 661.8v8.0M348.5 658.5v8.0M356.5 642.4v8.0M361.3 639.2v4.8M362.9 636.0v4.8M372.5 636.0v1.6M374.1 636.0v4.8M378.9 636.0v4.8M383.7 636.0v4.8M391.7 623.1v1.6M396.5 616.7v4.8M406.1 613.5v1.6M417.3 616.7v1.6M425.3 623.1v4.8M426.9 626.4v1.6M428.5 626.4v1.6M430.1 626.4v1.6M431.7 623.1v4.8M433.3 626.4v4.8M436.5 629.6v1.6M439.7 632.8v8.0M441.3 632.8v4.8M446.1 623.1v11.3M450.9 626.4v1.6M457.3 626.4v1.6M458.9 626.4v1.6M460.5 623.1v1.6M462.1 623.1v1.6M463.7 623.1v1.6M465.3 623.1v1.6M466.9 623.1v1.6M468.5 623.1v1.6M468.5 619.9v1.6M470.1 619.9v1.6M474.9 626.4v1.6M476.5 626.4v1.6M476.5 629.6v1.6M478.1 629.6v1.6M479.7 629.6v1.6M481.3 629.6v1.6M482.9 629.6v1.6M484.5 629.6v1.6M487.7 629.6v1.6M489.3 629.6v1.6M490.9 629.6v1.6M492.5 629.6v1.6M495.7 636.0v1.6M497.3 636.0v1.6M497.3 636.0v1.6M498.9 639.2v1.6M500.5 639.2v1.6M502.1 632.8v1.6M503.7 632.8v1.6M505.3 632.8v1.6M506.9 632.8v1.6M508.5 636.0v1.6M510.1 636.0v1.6M511.7 639.2v1.6M513.3 639.2v1.6M514.9 639.2v1.6M514.9 639.2v1.6M516.5 636.0v1.6M526.1 632.8v1.6M527.7 632.8v1.6M529.3 632.8v1.6M530.9 632.8v1.6M530.9 632.8v1.6M545.3 639.2v1.6M548.5 639.2v1.6M550.1 639.2v1.6M550.1 639.2v1.6M551.7 639.2v1.6M553.3 639.2v1.6M553.3 642.4v1.6M554.9 642.4v1.6M558.1 645.7v1.6M559.7 645.7v1.6M562.9 642.4v1.6M564.5 639.2v1.6M566.1 639.2v1.6M566.1 639.2v1.6M567.7 639.2v1.6M569.3 639.2v1.6M567.7 636.0v1.6M569.3 636.0v1.6M575.7 629.6v1.6M577.3 629.6v1.6M580.5 636.0v1.6M582.1 636.0v1.6M583.7 642.4v1.6M585.3 642.4v1.6M591.7 632.8v1.6M593.3 632.8v1.6M594.9 632.8v1.6M593.3 629.6v1.6M594.9 629.6v1.6M599.7 619.9v1.6M601.3 619.9v1.6M604.5 626.4v1.6M610.9 623.1v1.6M612.5 623.1v1.6M615.7 616.7v1.6M617.3 616.7v1.6M618.9 616.7v1.6M618.9 613.5v1.6M620.5 613.5v1.6M622.1 613.5v1.6M625.3 616.7v1.6M626.9 616.7v1.6M628.5 616.7v1.6M630.1 619.9v1.6M631.7 619.9v1.6M633.3 619.9v1.6M633.3 619.9v1.6M634.9 616.7v1.6M636.5 616.7v1.6M644.5 626.4v1.6M646.1 626.4v1.6M652.5 619.9v1.6M655.7 613.5v1.6M657.3 613.5v1.6M658.9 613.5v1.6M657.3 610.3v1.6M658.9 610.3v1.6M663.7 603.8v1.6M665.3 603.8v1.6M666.9 603.8v1.6M668.5 603.8v1.6M670.1 603.8v1.6M673.3 607.0v1.6M674.9 607.0v1.6M676.5 607.0v1.6M678.1 607.0v1.6M679.7 610.3v1.6M681.3 610.3v1.6M681.3 610.3v1.6M682.9 610.3v1.6M682.9 607.0v1.6M684.5 607.0v1.6M684.5 607.0v1.6M686.1 607.0v1.6M687.7 610.3v1.6M689.3 610.3v1.6M690.9 610.3v1.6M692.5 613.5v1.6M694.1 613.5v1.6M694.1 613.5v1.6M695.7 613.5v1.6M697.3 613.5v1.6M697.3 610.3v1.6M702.1 607.0v1.6M711.7 600.6v1.6M713.3 603.8v1.6M714.9 603.8v1.6M716.5 603.8v1.6M714.9 600.6v1.6M716.5 600.6v1.6M722.9 613.5v1.6M724.5 613.5v1.6M726.1 613.5v1.6M727.7 613.5v1.6M730.9 613.5v1.6M734.1 613.5v1.6M735.7 613.5v1.6M737.3 613.5v1.6M735.7 616.7v1.6M738.9 616.7v1.6M740.5 616.7v1.6M748.5 616.7v1.6M750.1 616.7v1.6M758.1 632.8v1.6M759.7 632.8v1.6M762.9 574.9v8.0M764.5 574.9v8.0M766.1 578.1v8.0M769.3 571.6v8.0M775.7 555.6v1.6M778.9 549.1v4.8M804.5 494.4v8.0M809.3 488.0v14.5M815.7 481.5v11.3M828.5 465.5v4.8M839.7 478.3v8.0M841.3 484.8v1.6M844.5 484.8v1.6M846.1 484.8v4.8M858.9 459.0v4.8M862.1 455.8v4.8M876.5 468.7v1.6M892.5 468.7v8.0M905.3 488.0v4.8M914.9 471.9v4.8M916.5 471.9v8.0M918.1 471.9v8.0M927.7 465.5v4.8M934.1 462.2v1.6M935.7 462.2v4.8M937.3 459.0v4.8M938.9 459.0v4.8M943.7 452.6v8.0M945.3 455.8v8.0M948.5 462.2v4.8M961.3 471.9v1.6M962.9 468.7v4.8M966.1 462.2v8.0M967.7 465.5v4.8M972.5 462.2v4.8M974.1 462.2v1.6M975.7 462.2v4.8M980.5 459.0v8.0M991.7 452.6v4.8M993.3 452.6v1.6M994.9 449.4v4.8M1001.3 442.9v4.8M1014.1 426.8v8.0M1023.7 433.3v4.8M1025.3 433.3v8.0M1028.5 433.3v1.6M1031.7 430.1v8.0M1033.3 426.8v4.8M1034.9 430.1v1.6M1038.1 430.1v8.0M1039.7 433.3v8.0M1042.9 430.1v4.8M1044.5 423.6v11.3M1060.5 442.9v4.8M1062.1 442.9v4.8M1073.3 465.5v1.6M1074.9 465.5v4.8M1078.1 465.5v4.8M1079.7 468.7v1.6M1081.3 468.7v1.6M1082.9 468.7v1.6M1087.7 471.9v8.0M1097.3 465.5v4.8M1105.3 468.7v4.8M1114.9 455.8v1.6M1121.3 465.5v8.0M1140.5 475.1v1.6M1142.1 475.1v4.8M1154.9 491.2v11.3M1162.9 494.4v1.6M1170.9 500.9v11.3M1183.7 520.2v11.3M1191.7 516.9v8.0M1201.3 504.1v11.3M1204.5 494.4v11.3M1207.7 497.6v8.0M1209.3 500.9v4.8M1215.7 500.9v4.8M1278.1 526.6v11.3M1282.9 520.2v11.3M1287.7 507.3v14.5M1298.9 562.0v4.8M1303.7 549.1v8.0M1305.3 549.1v8.0M1306.9 549.1v4.8M1314.9 552.3v11.3M1321.3 545.9v1.6M1330.9 539.5v8.0M1338.9 529.8v4.8M1351.7 526.6v11.3M1364.5 558.8v4.8M1366.1 555.6v4.8M1378.9 529.8v4.8M1394.9 529.8v11.3M1398.1 516.9v11.3M1399.7 510.5v17.7M1401.3 520.2v8.0M1402.9 526.6v8.0M1407.7 542.7v11.3M1417.3 526.6v11.3M1439.7 587.7v4.8M1441.3 587.7v17.7M1444.5 597.4v4.8M1455.7 594.2v4.8M1478.1 568.4v4.8M1482.9 568.4v4.8M1498.9 562.0v4.8M1503.7 552.3v14.5M1506.9 549.1v11.3M1510.1 552.3v4.8M1518.1 529.8v4.8M1521.3 536.3v1.6M1527.7 536.3v8.0M1553.3 500.9v11.3M1558.1 494.4v8.0M1559.7 497.6v11.3M1567.7 484.8v1.6M1578.9 488.0v1.6M1580.5 488.0v1.6M1583.7 494.4v1.6M1586.9 507.3v1.6M1588.5 513.7v1.6M1590.1 513.7v1.6M1591.7 513.7v1.6M1591.7 510.5v1.6M1593.3 510.5v1.6M1594.9 510.5v1.6M1599.7 494.4v1.6M1601.3 494.4v1.6M1601.3 494.4v1.6M1602.9 494.4v1.6M1610.9 504.1v1.6M1612.5 504.1v1.6M1626.9 491.2v1.6M1630.1 497.6v1.6M1631.7 497.6v1.6M1633.3 497.6v1.6M1638.1 484.8v1.6M1639.7 484.8v1.6M1642.9 468.7v1.6M1644.5 468.7v1.6M1650.9 468.7v1.6M1652.5 468.7v1.6M1654.1 468.7v1.6M1652.5 468.7v1.6M1654.1 468.7v1.6M1654.1 465.5v1.6M1655.7 465.5v1.6M1655.7 465.5v1.6M1657.3 465.5v1.6M1657.3 468.7v1.6M1658.9 468.7v1.6M1658.9 468.7v1.6M1662.1 475.1v1.6M1663.7 475.1v1.6M1665.3 475.1v1.6M1671.7 465.5v1.6M1676.5 468.7v1.6M1679.7 471.9v1.6M1681.3 471.9v1.6M1682.9 471.9v1.6M1681.3 471.9v1.6M1682.9 471.9v1.6M1684.5 475.1v1.6M1686.1 475.1v1.6M1695.7 471.9v1.6M1697.3 471.9v1.6M1702.1 481.5v1.6M1706.9 471.9v1.6M1708.5 471.9v1.6M1726.1 491.2v1.6M1730.9 488.0v1.6M1732.5 488.0v1.6M1734.1 488.0v1.6" stroke="#ffff80" stroke-width="1.7" fill="none"/><path d="M153.3 722.9v11.3M158.1 713.2v4.8M161.3 716.5v11.3M169.3 710.0v8.0M180.5 677.8v11.3M182.1 681.1v11.3M186.9 684.3v8.0M198.1 661.8v4.8M201.3 665.0v8.0M202.9 668.2v4.8M206.1 665.0v8.0M207.7 661.8v14.5M214.1 668.2v8.0M226.9 661.8v11.3M230.1 665.0v11.3M233.3 674.6v4.8M242.9 668.2v4.8M247.7 671.4v8.0M249.3 674.6v14.5M252.5 674.6v8.0M255.7 674.6v4.8M262.1 671.4v4.8M273.3 668.2v4.8M278.1 671.4v4.8M289.3 668.2v4.8M290.9 671.4v8.0M292.5 671.4v8.0M308.5 658.5v11.3M311.7 665.0v4.8M313.3 665.0v8.0M319.7 665.0v14.5M321.3 674.6v4.8M326.1 677.8v8.0M327.7 681.1v4.8M369.3 629.6v4.8M370.9 632.8v4.8M377.3 632.8v11.3M380.5 636.0v4.8M394.9 616.7v4.8M402.9 603.8v8.0M404.5 607.0v8.0M407.7 613.5v4.8M410.9 616.7v4.8M412.5 616.7v8.0M420.5 613.5v8.0M422.1 616.7v8.0M423.7 623.1v4.8M434.9 623.1v8.0M438.1 629.6v4.8M442.9 632.8v4.8M455.7 623.1v8.0M478.1 629.6v4.8M484.5 629.6v4.8M486.1 629.6v4.8M494.1 636.0v4.8M521.3 632.8v4.8M535.7 629.6v4.8M570.9 632.8v8.0M572.5 632.8v8.0M586.9 642.4v8.0M596.5 623.1v8.0M598.1 619.9v4.8M601.3 619.9v4.8M609.3 623.1v4.8M638.1 613.5v4.8M662.1 607.0v4.8M668.5 600.6v4.8M703.7 597.4v4.8M706.9 594.2v4.8M710.1 600.6v4.8M727.7 616.7v8.0M750.1 616.7v4.8M759.7 623.1v4.8M786.9 516.9v8.0M794.9 500.9v14.5M798.1 510.5v8.0M806.1 497.6v11.3M817.3 484.8v8.0M826.9 462.2v4.8M830.1 465.5v8.0M831.7 471.9v8.0M836.5 468.7v20.9M838.1 475.1v11.3M866.9 455.8v11.3M868.5 459.0v11.3M870.1 455.8v14.5M873.3 465.5v8.0M878.1 468.7v11.3M881.3 465.5v11.3M882.9 471.9v11.3M886.1 475.1v8.0M895.7 465.5v17.7M897.3 475.1v14.5M898.9 484.8v8.0M900.5 491.2v4.8M902.1 491.2v11.3M911.7 471.9v8.0M919.7 475.1v4.8M930.9 465.5v4.8M946.9 455.8v14.5M950.1 462.2v4.8M951.7 459.0v11.3M953.3 462.2v11.3M954.9 471.9v4.8M958.1 475.1v4.8M977.3 462.2v4.8M983.7 455.8v11.3M986.9 446.1v11.3M1004.5 439.7v11.3M1012.5 420.4v11.3M1017.3 430.1v4.8M1022.1 420.4v17.7M1036.5 430.1v8.0M1047.7 423.6v11.3M1049.3 423.6v14.5M1052.5 433.3v14.5M1055.7 442.9v8.0M1065.3 446.1v17.7M1066.9 452.6v8.0M1071.7 459.0v8.0M1076.5 465.5v4.8M1084.5 468.7v4.8M1090.9 468.7v14.5M1098.9 465.5v8.0M1100.5 468.7v8.0M1116.5 455.8v4.8M1119.7 459.0v8.0M1122.9 465.5v4.8M1124.5 468.7v8.0M1129.3 471.9v14.5M1138.9 471.9v4.8M1145.3 471.9v17.7M1146.9 484.8v11.3M1150.1 491.2v4.8M1159.7 488.0v8.0M1166.1 494.4v4.8M1169.3 497.6v4.8M1172.5 500.9v4.8M1177.3 504.1v17.7M1178.9 513.7v20.9M1180.5 526.6v8.0M1214.1 497.6v8.0M1220.5 497.6v17.7M1222.1 507.3v17.7M1223.7 516.9v24.1M1225.3 529.8v40.2M1226.9 545.9v20.9M1230.1 558.8v14.5M1234.9 558.8v24.1M1244.5 549.1v8.0M1246.1 552.3v8.0M1247.7 558.8v11.3M1249.3 562.0v17.7M1260.5 523.4v14.5M1262.1 526.6v14.5M1263.7 536.3v11.3M1265.3 545.9v4.8M1271.7 523.4v4.8M1274.9 523.4v11.3M1279.7 516.9v14.5M1289.3 513.7v20.9M1290.9 516.9v24.1M1292.5 533.0v24.1M1294.1 549.1v14.5M1295.7 549.1v14.5M1297.3 558.8v8.0M1308.5 552.3v4.8M1310.1 555.6v11.3M1311.7 558.8v14.5M1324.5 545.9v14.5M1329.3 529.8v14.5M1343.7 520.2v14.5M1345.3 526.6v11.3M1346.9 536.3v4.8M1356.5 507.3v14.5M1358.1 513.7v20.9M1359.7 516.9v37.0M1361.3 539.5v20.9M1362.9 555.6v8.0M1382.1 520.2v8.0M1383.7 526.6v4.8M1385.3 526.6v11.3M1390.1 533.0v14.5M1391.7 536.3v11.3M1404.5 526.6v14.5M1406.1 536.3v14.5M1409.3 542.7v11.3M1414.1 533.0v8.0M1422.1 520.2v17.7M1423.7 526.6v24.1M1425.3 545.9v14.5M1426.9 552.3v24.1M1430.1 568.4v8.0M1431.7 574.9v17.7M1433.3 581.3v17.7M1436.5 591.0v8.0M1442.9 587.7v17.7M1446.1 600.6v8.0M1449.3 603.8v8.0M1458.9 584.5v14.5M1473.3 562.0v17.7M1474.9 571.6v17.7M1481.3 565.2v17.7M1486.1 571.6v11.3M1487.7 571.6v14.5M1494.1 571.6v8.0M1508.5 549.1v8.0M1519.7 533.0v4.8M1524.5 533.0v14.5M1526.1 539.5v8.0M1530.9 539.5v11.3M1534.1 533.0v11.3M1542.1 523.4v8.0M1543.7 526.6v8.0M1546.9 520.2v11.3M1550.1 516.9v14.5M1556.5 497.6v14.5M1577.3 475.1v11.3M1585.3 497.6v8.0M1602.9 494.4v8.0M1644.5 465.5v8.0M1646.1 462.2v4.8M1682.9 475.1v4.8M1689.3 475.1v4.8M1697.3 471.9v4.8M1710.1 481.5v8.0M1713.3 478.3v4.8" stroke="#0a7ff0" stroke-width="1.7" fill="none"/><path d="M150.1 722.9v4.8M154.9 716.5v14.5M156.5 713.2v8.0M162.9 716.5v11.3M166.1 713.2v4.8M172.5 710.0v8.0M174.1 700.4v14.5M175.7 687.5v20.9M177.3 677.8v17.7M178.9 674.6v8.0M183.7 684.3v8.0M185.3 684.3v8.0M188.5 687.5v4.8M191.7 681.1v8.0M193.3 668.2v17.7M194.9 668.2v8.0M196.5 655.3v17.7M204.5 668.2v4.8M209.3 668.2v8.0M217.3 671.4v11.3M223.7 668.2v4.8M225.3 665.0v4.8M238.1 674.6v4.8M241.3 668.2v8.0M250.9 677.8v4.8M254.1 674.6v8.0M257.3 665.0v14.5M258.9 665.0v11.3M263.7 668.2v8.0M281.3 668.2v8.0M294.1 668.2v11.3M303.7 665.0v4.8M306.9 658.5v11.3M314.9 668.2v4.8M318.1 665.0v8.0M332.5 681.1v4.8M335.7 674.6v8.0M337.3 671.4v8.0M338.9 665.0v11.3M340.5 668.2v4.8M343.7 665.0v8.0M346.9 661.8v4.8M350.1 655.3v8.0M351.7 652.1v8.0M353.3 652.1v4.8M354.9 648.9v4.8M359.7 639.2v14.5M364.5 636.0v4.8M366.1 632.8v4.8M367.7 629.6v4.8M375.7 632.8v4.8M382.1 636.0v4.8M385.3 629.6v8.0M386.9 623.1v11.3M388.5 626.4v4.8M390.1 623.1v8.0M393.3 616.7v8.0M398.1 607.0v14.5M399.7 600.6v14.5M401.3 603.8v4.8M414.1 616.7v8.0M415.7 616.7v4.8M444.5 632.8v8.0M447.7 629.6v8.0M449.3 626.4v4.8M452.5 623.1v4.8M481.3 626.4v4.8M490.9 629.6v4.8M492.5 632.8v4.8M500.5 632.8v4.8M503.7 629.6v4.8M518.1 629.6v4.8M519.7 629.6v4.8M522.9 629.6v4.8M527.7 626.4v8.0M554.9 636.0v8.0M577.3 629.6v4.8M612.5 613.5v8.0M617.3 613.5v4.8M646.1 623.1v4.8M649.3 623.1v4.8M654.1 613.5v4.8M658.9 603.8v8.0M670.1 600.6v4.8M674.9 603.8v4.8M690.9 607.0v8.0M698.9 607.0v8.0M700.5 610.3v4.8M716.5 594.2v8.0M737.3 613.5v4.8M743.7 613.5v4.8M767.7 574.9v8.0M770.9 562.0v14.5M772.5 555.6v17.7M774.1 555.6v11.3M777.3 552.3v4.8M780.5 539.5v14.5M783.7 523.4v20.9M785.3 520.2v8.0M788.5 516.9v8.0M790.1 507.3v11.3M791.7 507.3v4.8M793.3 504.1v8.0M799.7 507.3v11.3M802.9 497.6v14.5M810.9 488.0v14.5M812.5 481.5v14.5M818.9 481.5v11.3M820.5 478.3v8.0M822.1 471.9v11.3M823.7 468.7v4.8M825.3 462.2v8.0M833.3 471.9v8.0M834.9 468.7v8.0M849.3 481.5v4.8M850.9 475.1v8.0M855.7 465.5v14.5M857.3 462.2v4.8M860.5 455.8v8.0M865.3 455.8v4.8M871.7 465.5v8.0M874.9 468.7v4.8M879.7 465.5v8.0M889.3 478.3v11.3M890.9 468.7v11.3M894.1 471.9v11.3M903.7 491.2v11.3M906.9 481.5v14.5M908.5 478.3v11.3M910.1 475.1v4.8M913.3 471.9v8.0M921.3 475.1v8.0M922.9 471.9v4.8M926.1 468.7v4.8M929.3 465.5v4.8M932.5 462.2v8.0M940.5 455.8v8.0M942.1 449.4v11.3M959.7 471.9v14.5M964.5 468.7v4.8M969.3 465.5v11.3M970.9 462.2v11.3M978.9 459.0v11.3M982.1 455.8v11.3M985.3 452.6v8.0M988.5 452.6v11.3M998.1 446.1v8.0M999.7 442.9v4.8M1002.9 439.7v8.0M1006.1 433.3v20.9M1007.7 423.6v14.5M1009.3 420.4v8.0M1010.9 420.4v8.0M1018.9 426.8v11.3M1020.5 423.6v8.0M1026.9 433.3v4.8M1030.1 430.1v4.8M1041.3 430.1v8.0M1046.1 420.4v11.3M1057.3 442.9v8.0M1094.1 465.5v17.7M1095.7 465.5v4.8M1103.7 471.9v4.8M1106.9 468.7v4.8M1110.1 455.8v14.5M1111.7 459.0v8.0M1113.3 455.8v4.8M1126.1 471.9v8.0M1130.9 481.5v4.8M1134.1 475.1v8.0M1137.3 471.9v8.0M1151.7 488.0v11.3M1182.1 529.8v8.0M1186.9 516.9v14.5M1194.9 500.9v20.9M1199.7 500.9v8.0M1202.9 500.9v11.3M1210.9 494.4v8.0M1218.9 497.6v8.0M1236.5 568.4v11.3M1238.1 565.2v11.3M1239.7 562.0v14.5M1241.3 552.3v14.5M1242.9 549.1v17.7M1252.5 555.6v20.9M1254.1 545.9v14.5M1255.7 536.3v14.5M1257.3 526.6v24.1M1268.5 523.4v27.3M1270.1 520.2v11.3M1273.3 520.2v8.0M1276.5 526.6v8.0M1281.3 523.4v8.0M1284.5 513.7v14.5M1286.1 513.7v14.5M1302.1 552.3v17.7M1313.3 558.8v11.3M1316.5 552.3v11.3M1318.1 549.1v11.3M1319.7 539.5v11.3M1327.7 536.3v14.5M1332.5 536.3v8.0M1334.1 536.3v4.8M1337.3 529.8v8.0M1342.1 523.4v17.7M1348.5 533.0v11.3M1350.1 529.8v8.0M1354.9 497.6v37.0M1369.3 549.1v11.3M1370.9 545.9v11.3M1374.1 539.5v8.0M1377.3 529.8v11.3M1380.5 523.4v17.7M1386.9 533.0v8.0M1393.3 533.0v11.3M1396.5 523.4v14.5M1412.5 529.8v17.7M1415.7 529.8v11.3M1418.9 523.4v8.0M1420.5 520.2v11.3M1434.9 591.0v17.7M1438.1 587.7v11.3M1450.9 597.4v11.3M1452.5 597.4v8.0M1454.1 594.2v11.3M1457.3 591.0v8.0M1460.5 594.2v4.8M1465.3 587.7v14.5M1466.9 574.9v14.5M1470.1 562.0v20.9M1471.7 555.6v14.5M1476.5 571.6v8.0M1479.7 555.6v17.7M1489.3 574.9v14.5M1490.9 574.9v17.7M1492.5 565.2v11.3M1497.3 565.2v17.7M1500.5 558.8v8.0M1502.1 552.3v11.3M1505.3 542.7v14.5M1511.7 549.1v8.0M1514.9 533.0v27.3M1516.5 533.0v4.8M1522.9 533.0v4.8M1529.3 539.5v11.3M1532.5 539.5v14.5M1537.3 529.8v17.7M1538.9 526.6v11.3M1540.5 523.4v20.9M1545.3 510.5v24.1M1548.5 516.9v11.3M1551.7 510.5v20.9M1554.9 497.6v20.9M1561.3 494.4v8.0M1562.9 488.0v11.3M1564.5 481.5v14.5M1566.1 481.5v8.0M1569.3 478.3v8.0M1575.7 475.1v8.0M1582.1 484.8v8.0M1604.5 491.2v4.8M1634.9 488.0v4.8M1660.5 468.7v4.8M1670.1 459.0v4.8M1673.3 462.2v4.8M1700.5 471.9v4.8M1727.7 488.0v4.8" stroke="#ff0000" stroke-width="1.7" fill="none"/><rect x="13.7" y="755.5" width="4.0" height="2.0" fill="#ffff80"/><rect x="21.2" y="749.4" width="2.5" height="2.0" fill="#ffff80"/><rect x="30.9" y="752.6" width="2.0" height="3.0" fill="#ff0000"/><rect x="32.4" y="761.7" width="2.5" height="2.0" fill="#ffff80"/><rect x="38.5" y="767.8" width="2.5" height="2.0" fill="#ffff80"/><rect x="41.8" y="774.7" width="2.0" height="3.0" fill="#0a7ff0"/><rect x="46.4" y="767.8" width="2.5" height="2.0" fill="#ffff80"/><rect x="51.1" y="755.5" width="4.0" height="2.0" fill="#ffff80"/><rect x="53.1" y="746.4" width="3.0" height="6.0" fill="#ff0000"/><rect x="66.6" y="755.5" width="4.0" height="2.0" fill="#ffff80"/><rect x="68.1" y="764.7" width="4.0" height="2.0" fill="#ffff80"/><rect x="77.8" y="749.8" width="3.0" height="3.0" fill="#ff0000"/><rect x="83.0" y="749.8" width="3.0" height="3.0" fill="#0a7ff0"/><rect x="91.5" y="752.1" width="2.5" height="2.0" fill="#ffff80"/><rect x="101.2" y="746.2" width="2.5" height="2.0" fill="#ffff80"/><rect x="104.2" y="746.5" width="2.0" height="3.0" fill="#ff0000"/><rect x="110.3" y="752.5" width="2.5" height="2.0" fill="#ffff80"/><rect x="115.0" y="758.6" width="2.5" height="2.0" fill="#ffff80"/><rect x="119.8" y="764.7" width="4.0" height="2.0" fill="#ffff80"/><rect x="124.9" y="761.8" width="3.0" height="3.0" fill="#0a7ff0"/><rect x="127.0" y="764.7" width="8.0" height="2.0" fill="#ffff80"/><rect x="132.8" y="771.4" width="3.0" height="3.0" fill="#0a7ff0"/><rect x="140.1" y="771.1" width="4.0" height="2.0" fill="#ffff80"/><rect x="145.2" y="757.6" width="3.0" height="4.0" fill="#ffff80"/><rect x="1750.5" y="485.0" width="4.0" height="2.0" fill="#ffff80"/><rect x="1761.5" y="488.3" width="4.0" height="2.0" fill="#ffff80"/><rect x="1764.0" y="489.5" width="3.0" height="2.0" fill="#0a7ff0"/><rect x="1766.2" y="485.0" width="4.0" height="2.0" fill="#ffff80"/><rect x="1775.1" y="492.4" width="2.0" height="5.0" fill="#ff0000"/><rect x="1782.3" y="488.3" width="3.0" height="2.0" fill="#ffff80"/><rect x="1782.5" y="486.7" width="6.0" height="5.0" fill="#0a7ff0"/><rect x="1788.5" y="485.5" width="3.0" height="3.0" fill="#0a7ff0"/><rect x="1794.8" y="482.5" width="3.0" height="3.0" fill="#ff0000"/><rect x="1798.7" y="485.5" width="2.5" height="2.0" fill="#ffff80"/><rect x="1802.0" y="485.5" width="2.5" height="2.0" fill="#ffff80"/><rect x="1803.7" y="482.2" width="2.5" height="2.0" fill="#ffff80"/><rect x="1805.3" y="485.5" width="2.5" height="2.0" fill="#ffff80"/><rect x="1806.9" y="474.3" width="2.0" height="11.0" fill="#ff0000"/><rect x="1811.0" y="482.4" width="2.5" height="6.0" fill="#0a7ff0"/><rect x="1816.2" y="494.7" width="2.5" height="2.0" fill="#ffff80"/><rect x="1820.8" y="482.2" width="2.5" height="2.0" fill="#ffff80"/><rect x="1825.7" y="497.9" width="2.0" height="6.0" fill="#0a7ff0"/><rect x="1830.0" y="501.0" width="4.0" height="2.0" fill="#ffff80"/><rect x="1833.4" y="491.6" width="4.0" height="2.0" fill="#ffff80"/><rect x="1836.5" y="494.7" width="4.0" height="2.0" fill="#ffff80"/><rect x="1839.5" y="501.0" width="4.0" height="2.0" fill="#ffff80"/><rect x="1841.3" y="494.7" width="4.0" height="2.0" fill="#ffff80"/><rect x="1844.4" y="497.7" width="4.0" height="2.0" fill="#ffff80"/><rect x="1843.4" y="491.6" width="6.0" height="2.0" fill="#ffff80"/><rect x="1847.5" y="488.2" width="4.0" height="2.0" fill="#ffff80"/><rect x="1852.0" y="485.3" width="4.0" height="2.0" fill="#ffff80"/><rect x="1855.1" y="479.1" width="7.0" height="2.0" fill="#ffff80"/><rect x="1856.6" y="474.2" width="4.0" height="2.0" fill="#ffff80"/><rect x="1863.0" y="482.2" width="4.0" height="2.0" fill="#ffff80"/><rect x="1866.8" y="468.2" width="2.5" height="6.0" fill="#ff0000"/><rect x="1894.3" y="488.5" width="5.0" height="2.0" fill="#ffff80"/><rect x="1900.7" y="488.5" width="4.0" height="2.0" fill="#ffff80"/><rect x="1915.3" y="471.2" width="3.0" height="15.0" fill="#ff0000"/><rect x="1916.5" y="483.0" width="2.0" height="6.0" fill="#ff0000"/><rect x="1918.1" y="471.1" width="5.0" height="2.0" fill="#ffff80"/><polyline points="13.3 927.8 14.9 926.2 16.5 926.2 18.1 927.8 19.7 932.6 21.3 935.8 22.9 943.8 24.5 948.6 26.1 945.4 27.7 942.2 29.3 942.2 30.9 947.0 32.5 950.2 34.1 950.2 35.7 953.4 37.3 953.4 38.9 955.0 40.5 950.2 42.1 948.6 43.7 945.4 45.3 942.2 46.9 945.4 48.5 948.6 50.1 953.4 51.7 951.8 53.3 955.0 54.9 956.6 56.5 951.8 58.1 948.6 59.7 947.0 61.3 948.6 62.9 948.6 64.5 947.0 66.1 948.6 67.7 943.8 69.3 934.2 70.9 923.0 72.5 923.0 74.1 923.0 75.7 923.0 77.3 919.8 78.9 915.0 80.5 927.8 82.1 934.2 83.7 937.4 85.3 940.6 86.9 939.0 88.5 958.2 90.1 959.8 91.7 958.2 93.3 953.4 94.9 951.8 96.5 953.4 98.1 955.0 99.7 955.0 101.3 958.2 102.9 961.4 104.5 964.6 106.1 964.6 107.7 969.4 109.3 969.4 110.9 971.0 112.5 969.4 114.1 966.2 115.7 966.2 117.3 961.4 118.9 961.4 120.5 959.8 122.1 956.6 123.7 959.8 125.3 958.2 126.9 961.4 128.5 958.2 130.1 955.0 131.7 955.0 133.3 950.2 134.9 942.2 136.5 939.0 138.1 935.8 139.7 934.2 141.3 939.0 142.9 939.0 144.5 937.4 146.1 937.4 147.7 943.8 149.3 951.8 150.9 955.0 152.5 956.6 154.1 955.0 155.7 961.4 157.3 966.2 158.9 967.8 160.5 967.8 162.1 967.8 163.7 974.2 165.3 979.0 166.9 980.6 168.5 980.6 170.1 980.6 171.7 979.0 173.3 977.4 174.9 979.0 176.5 979.0 178.1 987.0 179.7 995.0 181.3 1001.4 182.9 999.8 184.5 993.4 186.1 996.6 187.7 993.4 189.3 995.0 190.9 999.8 192.5 1007.8 194.1 1011.0 195.7 1014.2 197.3 1019.0 198.9 1020.6 200.5 1020.6 202.1 1015.8 203.7 1006.2 205.3 1011.0 206.9 1009.4 208.5 1007.8 210.1 1009.4 211.7 1011.0 213.3 1012.6 214.9 1015.8 216.5 1017.4 218.1 1020.6 219.7 1023.8 221.3 1027.0 222.9 1025.4 224.5 1022.2 226.1 1027.0 227.7 1025.4 229.3 1019.0 230.9 1017.4 232.5 1017.4 234.1 1017.4 235.7 1014.2 237.3 1015.8 238.9 1011.0 240.5 1009.4 242.1 1011.0 243.7 1017.4 245.3 1015.8 246.9 1019.0 248.5 1017.4 250.1 1012.6 251.7 1011.0 253.3 1012.6 254.9 1009.4 256.5 1006.2 258.1 1004.6 259.7 1007.8 261.3 1012.6 262.9 1009.4 264.5 1009.4 266.1 1007.8 267.7 1006.2 269.3 1007.8 270.9 1004.6 272.5 999.8 274.1 998.2 275.7 996.6 277.3 995.0 278.9 995.0 280.5 998.2 282.1 1003.0 283.7 998.2 285.3 996.6 286.9 998.2 288.5 1004.6 290.1 1004.6 291.7 1003.0 293.3 999.8 294.9 998.2 296.5 999.8 298.1 999.8 299.7 996.6 301.3 996.6 302.9 991.8 304.5 995.0 306.1 996.6 307.7 999.8 309.3 1001.4 310.9 1001.4 312.5 999.8 314.1 999.8 315.7 998.2 317.3 995.0 318.9 988.6 320.5 988.6 322.1 988.6 323.7 990.2 325.3 988.6 326.9 985.4 328.5 987.0 330.1 988.6 331.7 979.0 333.3 969.4 334.9 969.4 336.5 967.8 338.1 967.8 339.7 964.6 341.3 964.6 342.9 969.4 344.5 972.6 346.1 971.0 347.7 972.6 349.3 969.4 350.9 971.0 352.5 964.6 354.1 966.2 355.7 964.6 357.3 966.2 358.9 966.2 360.5 967.8 362.1 969.4 363.7 966.2 365.3 967.8 366.9 966.2 368.5 971.0 370.1 969.4 371.7 974.2 373.3 972.6 374.9 969.4 376.5 971.0 378.1 967.8 379.7 964.6 381.3 964.6 382.9 964.6 384.5 967.8 386.1 967.8 387.7 974.2 389.3 977.4 390.9 979.0 392.5 975.8 394.1 972.6 395.7 974.2 397.3 974.2 398.9 975.8 400.5 975.8 402.1 979.0 403.7 977.4 405.3 979.0 406.9 975.8 408.5 971.0 410.1 967.8 411.7 967.8 413.3 963.0 414.9 961.4 416.5 963.0 418.1 956.6 419.7 958.2 421.3 958.2 422.9 959.8 424.5 959.8 426.1 955.0 427.7 956.6 429.3 958.2 430.9 958.2 432.5 958.2 434.1 958.2 435.7 958.2 437.3 961.4 438.9 961.4 440.5 958.2 442.1 958.2 443.7 961.4 445.3 964.6 446.9 963.0 448.5 964.6 450.1 961.4 451.7 963.0 453.3 961.4 454.9 963.0 456.5 963.0 458.1 961.4 459.7 964.6 461.3 963.0 462.9 959.8 464.5 956.6 466.1 959.8 467.7 956.6 469.3 953.4 470.9 958.2 472.5 959.8 474.1 963.0 475.7 964.6 477.3 963.0 478.9 963.0 480.5 958.2 482.1 958.2 483.7 963.0 485.3 963.0 486.9 964.6 488.5 969.4 490.1 971.0 491.7 975.8 493.3 971.0 494.9 972.6 496.5 977.4 498.1 974.2 499.7 974.2 501.3 974.2 502.9 979.0 504.5 982.2 506.1 983.8 507.7 980.6 509.3 977.4 510.9 977.4 512.5 975.8 514.1 974.2 515.7 972.6 517.3 975.8 518.9 982.2 520.5 977.4 522.1 980.6 523.7 980.6 525.3 980.6 526.9 982.2 528.5 982.2 530.1 982.2 531.7 982.2 533.3 979.0 534.9 980.6 536.5 980.6 538.1 979.0 539.7 975.8 541.3 969.4 542.9 969.4 544.5 967.8 546.1 964.6 547.7 963.0 549.3 958.2 550.9 958.2 552.5 959.8 554.1 963.0 555.7 969.4 557.3 972.6 558.9 974.2 560.5 980.6 562.1 977.4 563.7 972.6 565.3 971.0 566.9 972.6 568.5 974.2 570.1 974.2 571.7 972.6 573.3 975.8 574.9 977.4 576.5 975.8 578.1 974.2 579.7 971.0 581.3 974.2 582.9 979.0 584.5 974.2 586.1 966.2 587.7 969.4 589.3 967.8 590.9 969.4 592.5 975.8 594.1 980.6 595.7 982.2 597.3 983.8 598.9 980.6 600.5 977.4 602.1 975.8 603.7 975.8 605.3 969.4 606.9 969.4 608.5 971.0 610.1 971.0 611.7 972.6 613.3 974.2 614.9 972.6 616.5 971.0 618.1 972.6 619.7 972.6 621.3 975.8 622.9 977.4 624.5 980.6 626.1 983.8 627.7 983.8 629.3 983.8 630.9 979.0 632.5 980.6 634.1 985.4 635.7 991.8 637.3 991.8 638.9 999.8 640.5 998.2 642.1 991.8 643.7 988.6 645.3 988.6 646.9 988.6 648.5 985.4 650.1 988.6 651.7 990.2 653.3 990.2 654.9 990.2 656.5 995.0 658.1 995.0 659.7 990.2 661.3 990.2 662.9 990.2 664.5 988.6 666.1 987.0 667.7 982.2 669.3 980.6 670.9 982.2 672.5 980.6 674.1 983.8 675.7 980.6 677.3 980.6 678.9 977.4 680.5 977.4 682.1 974.2 683.7 980.6 685.3 979.0 686.9 979.0 688.5 980.6 690.1 983.8 691.7 980.6 693.3 972.6 694.9 971.0 696.5 972.6 698.1 972.6 699.7 969.4 701.3 971.0 702.9 969.4 704.5 967.8 706.1 967.8 707.7 967.8 709.3 966.2 710.9 971.0 712.5 969.4 714.1 963.0 715.7 964.6 717.3 961.4 718.9 956.6 720.5 945.4 722.1 948.6 723.7 947.0 725.3 947.0 726.9 945.4 728.5 940.6 730.1 945.4 731.7 948.6 733.3 950.2 734.9 948.6 736.5 950.2 738.1 950.2 739.7 947.0 741.3 950.2 742.9 953.4 744.5 959.8 746.1 966.2 747.7 966.2 749.3 966.2 750.9 967.8 752.5 966.2 754.1 961.4 755.7 961.4 757.3 950.2 758.9 948.6 760.5 951.8 762.1 948.6 763.7 950.2 765.3 950.2 766.9 945.4 768.5 945.4 770.1 945.4 771.7 951.8 773.3 963.0 774.9 969.4 776.5 972.6 778.1 979.0 779.7 975.8 781.3 964.6 782.9 961.4 784.5 958.2 786.1 953.4 787.7 943.8 789.3 950.2 790.9 955.0 792.5 959.8 794.1 958.2 795.7 961.4 797.3 964.6 798.9 967.8 800.5 969.4 802.1 966.2 803.7 975.8 805.3 985.4 806.9 988.6 808.5 987.0 810.1 985.4 811.7 993.4 813.3 987.0 814.9 993.4 816.5 996.6 818.1 990.2 819.7 995.0 821.3 999.8 822.9 1001.4 824.5 1007.8 826.1 998.2 827.7 998.2 829.3 996.6 830.9 998.2 832.5 987.0 834.1 987.0 835.7 982.2 837.3 979.0 838.9 974.2 840.5 969.4 842.1 969.4 843.7 967.8 845.3 966.2 846.9 967.8 848.5 964.6 850.1 967.8 851.7 972.6 853.3 974.2 854.9 979.0 856.5 972.6 858.1 967.8 859.7 969.4 861.3 971.0 862.9 971.0 864.5 974.2 866.1 972.6 867.7 972.6 869.3 969.4 870.9 969.4 872.5 969.4 874.1 972.6 875.7 971.0 877.3 966.2 878.9 971.0 880.5 977.4 882.1 979.0 883.7 974.2 885.3 972.6 886.9 982.2 888.5 987.0 890.1 985.4 891.7 982.2 893.3 982.2 894.9 980.6 896.5 975.8 898.1 977.4 899.7 971.0 901.3 972.6 902.9 969.4 904.5 969.4 906.1 964.6 907.7 961.4 909.3 953.4 910.9 956.6 912.5 964.6 914.1 964.6 915.7 959.8 917.3 961.4 918.9 963.0 920.5 958.2 922.1 953.4 923.7 950.2 925.3 956.6 926.9 963.0 928.5 963.0 930.1 961.4 931.7 958.2 933.3 956.6 934.9 958.2 936.5 959.8 938.1 959.8 939.7 961.4 941.3 966.2 942.9 964.6 944.5 964.6 946.1 956.6 947.7 953.4 949.3 953.4 950.9 950.2 952.5 950.2 954.1 940.6 955.7 932.6 957.3 937.4 958.9 942.2 960.5 943.8 962.1 945.4 963.7 942.2 965.3 940.6 966.9 940.6 968.5 937.4 970.1 939.0 971.7 950.2 973.3 945.4 974.9 945.4 976.5 940.6 978.1 931.0 979.7 923.0 981.3 929.4 982.9 932.6 984.5 935.8 986.1 942.2 987.7 947.0 989.3 950.2 990.9 955.0 992.5 961.4 994.1 956.6 995.7 956.6 997.3 956.6 998.9 955.0 1000.5 959.8 1002.1 961.4 1003.7 963.0 1005.3 966.2 1006.9 971.0 1008.5 977.4 1010.1 974.2 1011.7 967.8 1013.3 959.8 1014.9 961.4 1016.5 958.2 1018.1 959.8 1019.7 958.2 1021.3 956.6 1022.9 955.0 1024.5 951.8 1026.1 955.0 1027.7 955.0 1029.3 956.6 1030.9 961.4 1032.5 966.2 1034.1 961.4 1035.7 956.6 1037.3 959.8 1038.9 951.8 1040.5 951.8 1042.1 950.2 1043.7 951.8 1045.3 951.8 1046.9 950.2 1048.5 956.6 1050.1 953.4 1051.7 945.4 1053.3 940.6 1054.9 942.2 1056.5 943.8 1058.1 940.6 1059.7 940.6 1061.3 937.4 1062.9 935.8 1064.5 931.0 1066.1 932.6 1067.7 932.6 1069.3 934.2 1070.9 929.4 1072.5 927.8 1074.1 929.4 1075.7 934.2 1077.3 937.4 1078.9 935.8 1080.5 942.2 1082.1 939.0 1083.7 945.4 1085.3 945.4 1086.9 948.6 1088.5 945.4 1090.1 943.8 1091.7 940.6 1093.3 945.4 1094.9 947.0 1096.5 955.0 1098.1 963.0 1099.7 967.8 1101.3 967.8 1102.9 966.2 1104.5 967.8 1106.1 961.4 1107.7 959.8 1109.3 956.6 1110.9 956.6 1112.5 974.2 1114.1 982.2 1115.7 990.2 1117.3 996.6 1118.9 998.2 1120.5 990.2 1122.1 985.4 1123.7 987.0 1125.3 990.2 1126.9 988.6 1128.5 987.0 1130.1 982.2 1131.7 979.0 1133.3 975.8 1134.9 972.6 1136.5 969.4 1138.1 966.2 1139.7 963.0 1141.3 964.6 1142.9 969.4 1144.5 975.8 1146.1 972.6 1147.7 966.2 1149.3 966.2 1150.9 964.6 1152.5 969.4 1154.1 980.6 1155.7 979.0 1157.3 975.8 1158.9 972.6 1160.5 969.4 1162.1 966.2 1163.7 963.0 1165.3 967.8 1166.9 967.8 1168.5 969.4 1170.1 971.0 1171.7 969.4 1173.3 972.6 1174.9 967.8 1176.5 964.6 1178.1 961.4 1179.7 958.2 1181.3 951.8 1182.9 948.6 1184.5 948.6 1186.1 939.0 1187.7 931.0 1189.3 923.0 1190.9 921.4 1192.5 918.2 1194.1 927.8 1195.7 931.0 1197.3 927.8 1198.9 918.2 1200.5 910.2 1202.1 910.2 1203.7 910.2 1205.3 921.4 1206.9 921.4 1208.5 910.2 1210.1 913.4 1211.7 913.4 1213.3 911.8 1214.9 907.0 1216.5 897.4 1218.1 902.2 1219.7 899.0 1221.3 897.4 1222.9 899.0 1224.5 894.2 1226.1 884.6 1227.7 865.4 1229.3 886.2 1230.9 892.6 1232.5 886.2 1234.1 891.0 1235.7 905.4 1237.3 907.0 1238.9 895.8 1240.5 902.2 1242.1 902.2 1243.7 899.0 1245.3 894.2 1246.9 892.6 1248.5 897.4 1250.1 895.8 1251.7 903.8 1253.3 913.4 1254.9 913.4 1256.5 918.2 1258.1 918.2 1259.7 905.4 1261.3 910.2 1262.9 918.2 1264.5 918.2 1266.1 918.2 1267.7 919.8 1269.3 923.0 1270.9 934.2 1272.5 937.4 1274.1 927.8 1275.7 923.0 1277.3 918.2 1278.9 916.6 1280.5 923.0 1282.1 919.8 1283.7 923.0 1285.3 923.0 1286.9 924.6 1288.5 921.4 1290.1 913.4 1291.7 919.8 1293.3 915.0 1294.9 910.2 1296.5 910.2 1298.1 903.8 1299.7 910.2 1301.3 905.4 1302.9 907.0 1304.5 913.4 1306.1 918.2 1307.7 918.2 1309.3 915.0 1310.9 907.0 1312.5 899.0 1314.1 908.6 1315.7 907.0 1317.3 910.2 1318.9 910.2 1320.5 921.4 1322.1 926.2 1323.7 923.0 1325.3 924.6 1326.9 919.8 1328.5 927.8 1330.1 921.4 1331.7 911.8 1333.3 921.4 1334.9 921.4 1336.5 916.6 1338.1 916.6 1339.7 916.6 1341.3 923.0 1342.9 923.0 1344.5 929.4 1346.1 923.0 1347.7 926.2 1349.3 918.2 1350.9 918.2 1352.5 919.8 1354.1 924.6 1355.7 932.6 1357.3 935.8 1358.9 943.8 1360.5 948.6 1362.1 956.6 1363.7 958.2 1365.3 958.2 1366.9 956.6 1368.5 956.6 1370.1 963.0 1371.7 951.8 1373.3 943.8 1374.9 947.0 1376.5 945.4 1378.1 942.2 1379.7 942.2 1381.3 932.6 1382.9 934.2 1384.5 937.4 1386.1 947.0 1387.7 943.8 1389.3 935.8 1390.9 935.8 1392.5 931.0 1394.1 931.0 1395.7 927.8 1397.3 924.6 1398.9 923.0 1400.5 926.2 1402.1 926.2 1403.7 924.6 1405.3 918.2 1406.9 919.8 1408.5 921.4 1410.1 924.6 1411.7 929.4 1413.3 929.4 1414.9 931.0 1416.5 934.2 1418.1 940.6 1419.7 927.8 1421.3 923.0 1422.9 926.2 1424.5 908.6 1426.1 902.2 1427.7 895.8 1429.3 892.6 1430.9 886.2 1432.5 887.8 1434.1 879.8 1435.7 884.6 1437.3 884.6 1438.9 876.6 1440.5 876.6 1442.1 860.6 1443.7 854.2 1445.3 852.6 1446.9 849.4 1448.5 847.8 1450.1 843.0 1451.7 844.6 1453.3 847.8 1454.9 852.6 1456.5 852.6 1458.1 857.4 1459.7 859.0 1461.3 857.4 1462.9 854.2 1464.5 859.0 1466.1 867.0 1467.7 873.4 1469.3 881.4 1470.9 878.2 1472.5 871.8 1474.1 875.0 1475.7 873.4 1477.3 878.2 1478.9 891.0 1480.5 899.0 1482.1 897.4 1483.7 900.6 1485.3 903.8 1486.9 903.8 1488.5 910.2 1490.1 913.4 1491.7 913.4 1493.3 910.2 1494.9 916.6 1496.5 908.6 1498.1 911.8 1499.7 911.8 1501.3 921.4 1502.9 918.2 1504.5 926.2 1506.1 929.4 1507.7 921.4 1509.3 926.2 1510.9 921.4 1512.5 924.6 1514.1 931.0 1515.7 943.8 1517.3 942.2 1518.9 927.8 1520.5 931.0 1522.1 937.4 1523.7 945.4 1525.3 937.4 1526.9 939.0 1528.5 937.4 1530.1 940.6 1531.7 934.2 1533.3 943.8 1534.9 948.6 1536.5 956.6 1538.1 955.0 1539.7 953.4 1541.3 945.4 1542.9 943.8 1544.5 943.8 1546.1 935.8 1547.7 932.6 1549.3 939.0 1550.9 931.0 1552.5 937.4 1554.1 943.8 1555.7 937.4 1557.3 948.6 1558.9 953.4 1560.5 958.2 1562.1 964.6 1563.7 972.6 1565.3 977.4 1566.9 985.4 1568.5 990.2 1570.1 993.4 1571.7 1003.0 1573.3 1006.2 1574.9 1004.6 1576.5 1001.4 1578.1 999.8 1579.7 1003.0 1581.3 1006.2 1582.9 1007.8 1584.5 1006.2 1586.1 1003.0 1587.7 1003.0 1589.3 996.6 1590.9 995.0 1592.5 996.6 1594.1 999.8 1595.7 999.8 1597.3 1011.0 1598.9 1015.8 1600.5 1019.0 1602.1 1019.0 1603.7 1015.8 1605.3 1015.8 1606.9 1014.2 1608.5 1012.6 1610.1 1007.8 1611.7 1007.8 1613.3 1011.0 1614.9 1015.8 1616.5 1012.6 1618.1 1011.0 1619.7 1004.6 1621.3 1007.8 1622.9 1012.6 1624.5 1011.0 1626.1 1009.4 1627.7 1006.2 1629.3 1003.0 1630.9 999.8 1632.5 999.8 1634.1 1001.4 1635.7 1003.0 1637.3 1004.6 1638.9 1007.8 1640.5 1012.6 1642.1 1017.4 1643.7 1020.6 1645.3 1022.2 1646.9 1023.8 1648.5 1023.8 1650.1 1019.0 1651.7 1017.4 1653.3 1017.4 1654.9 1014.2 1656.5 1011.0 1658.1 1009.4 1659.7 1007.8 1661.3 1007.8 1662.9 1004.6 1664.5 1003.0 1666.1 1007.8 1667.7 1009.4 1669.3 1015.8 1670.9 1019.0 1672.5 1019.0 1674.1 1011.0 1675.7 1011.0 1677.3 1007.8 1678.9 1004.6 1680.5 1006.2 1682.1 1001.4 1683.7 999.8 1685.3 998.2 1686.9 996.6 1688.5 995.0 1690.1 996.6 1691.7 995.0 1693.3 998.2 1694.9 998.2 1696.5 998.2 1698.1 998.2 1699.7 998.2 1701.3 993.4 1702.9 993.4 1704.5 993.4 1706.1 993.4 1707.7 996.6 1709.3 995.0 1710.9 1001.4 1712.5 999.8 1714.1 999.8 1715.7 999.8 1717.3 993.4 1718.9 987.0 1720.5 991.8 1722.1 991.8 1723.7 993.4 1725.3 996.6 1726.9 993.4 1728.5 991.8 1730.1 990.2 1731.7 993.4 1733.3 991.8 1734.9 995.0 1736.5 993.4 1738.1 995.0 1739.7 996.6 1741.3 998.2 1742.9 999.8 1744.5 1001.4 1746.1 999.8 1747.7 995.0 1749.3 987.0 1750.9 987.0 1752.5 991.8 1754.1 990.2 1755.7 991.8 1757.3 996.6 1758.9 999.8 1760.5 1003.0 1762.1 1001.4 1763.7 999.8 1765.3 999.8 1766.9 1007.8 1768.5 1014.2 1770.1 1011.0 1771.7 1009.4 1773.3 1012.6 1774.9 1012.6 1776.5 1014.2 1778.1 1012.6 1779.7 1007.8 1781.3 1004.6 1782.9 1001.4 1784.5 1001.4 1786.1 998.2 1787.7 999.8 1789.3 1001.4 1790.9 1003.0 1792.5 1001.4 1794.1 1006.2 1795.7 1011.0 1797.3 1012.6 1798.9 1011.0 1800.5 1015.8 1802.1 1019.0 1803.7 1020.6 1805.3 1028.6 1806.9 1030.2 1808.5 1035.0 1810.1 1035.0 1811.7 1038.2 1813.3 1036.6 1814.9 1036.6 1816.5 1033.4 1818.1 1027.0 1819.7 1022.2 1821.3 1017.4 1822.9 1020.6 1824.5 1025.4 1826.1 1020.6 1827.7 1006.2 1829.3 1001.4 1830.9 998.2 1832.5 998.2 1834.1 1003.0 1835.7 1011.0 1837.3 1017.4 1838.9 1012.6 1840.5 1012.6 1842.1 1011.0 1843.7 1015.8 1845.3 1019.0 1846.9 1025.4 1848.5 1025.4 1850.1 1027.0 1851.7 1025.4 1853.3 1023.8 1854.9 1023.8 1856.5 1028.6 1858.1 1030.2 1859.7 1031.8 1861.3 1028.6 1862.9 1023.8 1864.5 1027.0 1866.1 1023.8 1867.7 1020.6 1869.3 1020.6 1870.9 1014.2 1872.5 1001.4 1874.1 1003.0 1875.7 1011.0 1877.3 1017.4 1878.9 1023.8 1880.5 1025.4 1882.1 1022.2 1883.7 1020.6 1885.3 1020.6 1886.9 1022.2 1888.5 1015.8 1890.1 1014.2 1891.7 1019.0 1893.3 1022.2 1894.9 1023.8 1896.5 1012.6 1898.1 1006.2 1899.7 1007.8 1901.3 1007.8 1902.9 1006.2 1904.5 1009.4 1906.1 1009.4 1907.7 1006.2 1909.3 1009.4 1910.9 1007.8 1912.5 1003.0 1914.1 1001.4 1915.7 1007.8 1917.3 1014.2 1918.9 1014.2 1920.5 1012.6 1922.1 1012.6 1923.7 1027.0" fill="none" stroke="#ff0000" stroke-width="3.3" stroke-linejoin="miter" stroke-linecap="square" shape-rendering="crispEdges"/><text class="cjk" x="11.6 30.8" y="96.9" fill="#dcdcdc">時刻</text><text transform="translate(50.0,97.3) scale(0.710,1)" x="3.76 14.28 27.80 44.32 54.84 68.36 84.89" y="0" font-family="Liberation Sans" font-size="21.6" font-weight="normal" fill="#dcdcdc" xml:space="preserve">:06:00 </text><text class="cjk" x="117.2 136.4" y="96.9" fill="#dcdcdc">始値</text><text transform="translate(155.6,97.3) scale(0.710,1)" x="3.76 14.28 30.80 41.32 54.84 68.36 84.89" y="0" font-family="Liberation Sans" font-size="21.6" font-weight="normal" fill="#dcdcdc" xml:space="preserve">:7,973 </text><text class="cjk" x="222.8 242.0" y="96.9" fill="#dcdcdc">高値</text><text transform="translate(261.2,97.3) scale(0.710,1)" x="3.76 14.28 30.80 41.32 54.84 68.36 84.89" y="0" font-family="Liberation Sans" font-size="21.6" font-weight="normal" fill="#dcdcdc" xml:space="preserve">:7,973 </text><text class="cjk" x="328.4 347.6" y="96.9" fill="#dcdcdc">安値</text><text transform="translate(366.8,97.3) scale(0.710,1)" x="3.76 14.28 30.80 41.32 54.84 68.36 84.89" y="0" font-family="Liberation Sans" font-size="21.6" font-weight="normal" fill="#dcdcdc" xml:space="preserve">:7,973 </text><text class="cjk" x="434.0 453.2" y="96.9" fill="#dcdcdc">終値</text><text transform="translate(472.4,97.3) scale(0.710,1)" x="3.76 14.28 30.80 41.32 54.84 68.36" y="0" font-family="Liberation Sans" font-size="21.6" font-weight="normal" fill="#dcdcdc" xml:space="preserve">:7,973</text><text transform="translate(1932.4,122.1) scale(0.710,1)" x="0.75 17.28 27.80 41.32 54.84" y="0" font-family="Liberation Sans" font-size="21.6" font-weight="normal" fill="#e2e2e2" xml:space="preserve">8,000</text><text transform="translate(1932.4,181.5) scale(0.710,1)" x="0.75 17.28 27.80 41.32 54.84" y="0" font-family="Liberation Sans" font-size="21.6" font-weight="normal" fill="#e2e2e2" xml:space="preserve">7,975</text><text transform="translate(1932.4,242.3) scale(0.710,1)" x="0.75 17.28 27.80 41.32 54.84" y="0" font-family="Liberation Sans" font-size="21.6" font-weight="normal" fill="#e2e2e2" xml:space="preserve">7,950</text><text transform="translate(1932.4,301.6) scale(0.710,1)" x="0.75 17.28 27.80 41.32 54.84" y="0" font-family="Liberation Sans" font-size="21.6" font-weight="normal" fill="#e2e2e2" xml:space="preserve">7,925</text><text transform="translate(1932.4,362.4) scale(0.710,1)" x="0.75 17.28 27.80 41.32 54.84" y="0" font-family="Liberation Sans" font-size="21.6" font-weight="normal" fill="#e2e2e2" xml:space="preserve">7,900</text><rect x="1931.2" y="174.4" width="93.0" height="33.2" fill="#d2d2d2"/><text transform="translate(1953.0,195.2) scale(0.720,1)" x="0.80 17.42 28.02 41.63 55.24" y="0" font-family="Liberation Sans" font-size="21.6" font-weight="bold" fill="#000" xml:space="preserve">7,973</text><text transform="translate(84.3,387.6) scale(0.710,1)" x="0.75 14.28" y="0" font-family="Liberation Sans" font-size="21.6" font-weight="normal" fill="#e2e2e2" xml:space="preserve">05</text><text transform="translate(171.9,387.6) scale(0.710,1)" x="0.75 14.28" y="0" font-family="Liberation Sans" font-size="21.6" font-weight="normal" fill="#e2e2e2" xml:space="preserve">09</text><text transform="translate(268.2,387.6) scale(0.710,1)" x="0.75 14.28" y="0" font-family="Liberation Sans" font-size="21.6" font-weight="normal" fill="#e2e2e2" xml:space="preserve">10</text><text transform="translate(364.5,387.6) scale(0.710,1)" x="0.75 14.28" y="0" font-family="Liberation Sans" font-size="21.6" font-weight="normal" fill="#e2e2e2" xml:space="preserve">11</text><text transform="translate(460.9,387.6) scale(0.710,1)" x="0.75 14.28" y="0" font-family="Liberation Sans" font-size="21.6" font-weight="normal" fill="#e2e2e2" xml:space="preserve">12</text><text transform="translate(556.5,387.6) scale(0.710,1)" x="0.75 14.28" y="0" font-family="Liberation Sans" font-size="21.6" font-weight="normal" fill="#e2e2e2" xml:space="preserve">13</text><text transform="translate(648.6,387.6) scale(0.710,1)" x="0.75 14.28" y="0" font-family="Liberation Sans" font-size="21.6" font-weight="normal" fill="#e2e2e2" xml:space="preserve">14</text><text transform="translate(760.4,387.6) scale(0.710,1)" x="0.75 14.28" y="0" font-family="Liberation Sans" font-size="21.6" font-weight="normal" fill="#e2e2e2" xml:space="preserve">16</text><text transform="translate(808.9,387.6) scale(0.710,1)" x="0.75 14.28" y="0" font-family="Liberation Sans" font-size="21.6" font-weight="normal" fill="#e2e2e2" xml:space="preserve">17</text><text transform="translate(904.5,387.6) scale(0.710,1)" x="0.75 14.28" y="0" font-family="Liberation Sans" font-size="21.6" font-weight="normal" fill="#e2e2e2" xml:space="preserve">18</text><text transform="translate(999.9,387.6) scale(0.710,1)" x="0.75 14.28" y="0" font-family="Liberation Sans" font-size="21.6" font-weight="normal" fill="#e2e2e2" xml:space="preserve">19</text><text transform="translate(1096.2,387.6) scale(0.710,1)" x="0.75 14.28" y="0" font-family="Liberation Sans" font-size="21.6" font-weight="normal" fill="#e2e2e2" xml:space="preserve">20</text><text transform="translate(1191.8,387.6) scale(0.710,1)" x="0.75 14.28" y="0" font-family="Liberation Sans" font-size="21.6" font-weight="normal" fill="#e2e2e2" xml:space="preserve">21</text><text transform="translate(1288.6,387.6) scale(0.710,1)" x="0.75 14.28" y="0" font-family="Liberation Sans" font-size="21.6" font-weight="normal" fill="#e2e2e2" xml:space="preserve">22</text><text transform="translate(1383.7,387.6) scale(0.710,1)" x="0.75 14.28" y="0" font-family="Liberation Sans" font-size="21.6" font-weight="normal" fill="#e2e2e2" xml:space="preserve">23</text><text transform="translate(1480.0,387.6) scale(0.710,1)" x="0.75 14.28" y="0" font-family="Liberation Sans" font-size="21.6" font-weight="normal" fill="#e2e2e2" xml:space="preserve">00</text><text transform="translate(1574.6,387.6) scale(0.710,1)" x="0.75 14.28" y="0" font-family="Liberation Sans" font-size="21.6" font-weight="normal" fill="#e2e2e2" xml:space="preserve">01</text><text transform="translate(1660.6,387.6) scale(0.710,1)" x="0.75 14.28" y="0" font-family="Liberation Sans" font-size="21.6" font-weight="normal" fill="#e2e2e2" xml:space="preserve">02</text><text transform="translate(1739.9,387.6) scale(0.710,1)" x="0.75 14.28" y="0" font-family="Liberation Sans" font-size="21.6" font-weight="normal" fill="#e2e2e2" xml:space="preserve">03</text><text transform="translate(1812.1,387.6) scale(0.710,1)" x="0.75 14.28" y="0" font-family="Liberation Sans" font-size="21.6" font-weight="normal" fill="#e2e2e2" xml:space="preserve">04</text><text transform="translate(1874.6,387.6) scale(0.710,1)" x="0.75 14.28" y="0" font-family="Liberation Sans" font-size="21.6" font-weight="normal" fill="#e2e2e2" xml:space="preserve">05</text><text transform="translate(122.4,387.6) scale(0.710,1)" x="0.75 14.28" y="0" font-family="Liberation Sans" font-size="21.6" font-weight="bold" fill="#fff" xml:space="preserve">06</text><text transform="translate(718.0,387.6) scale(0.710,1)" x="0.75 14.28" y="0" font-family="Liberation Sans" font-size="21.6" font-weight="normal" fill="#e2e2e2" xml:space="preserve">15</text><text transform="translate(1896.0,387.6) scale(0.710,1)" x="0.75 14.28" y="0" font-family="Liberation Sans" font-size="21.6" font-weight="normal" fill="#e2e2e2" xml:space="preserve">06</text><text transform="translate(1480.0,363.0) scale(0.710,1)" x="0.75 14.28" y="0" font-family="Liberation Sans" font-size="21.6" font-weight="normal" fill="#e2e2e2" xml:space="preserve">14</text><text class="cjk" x="11.6 30.8" y="425.5" fill="#dcdcdc">時刻</text><text transform="translate(50.0,425.9) scale(0.710,1)" x="3.76 14.28 27.80 44.32 54.84 68.36 84.89" y="0" font-family="Liberation Sans" font-size="21.6" font-weight="normal" fill="#dcdcdc" xml:space="preserve">:06:00 </text><text class="cjk" x="117.2 136.4" y="425.5" fill="#dcdcdc">始値</text><text transform="translate(155.6,425.9) scale(0.710,1)" x="3.76 16.69 30.21 43.73 57.84" y="0" font-family="Liberation Sans" font-size="21.6" font-weight="normal" fill="#dcdcdc" xml:space="preserve">:--- </text><text class="cjk" x="203.6 222.8" y="425.5" fill="#dcdcdc">高値</text><text transform="translate(242.0,425.9) scale(0.710,1)" x="3.76 16.69 30.21 43.73 57.84" y="0" font-family="Liberation Sans" font-size="21.6" font-weight="normal" fill="#dcdcdc" xml:space="preserve">:--- </text><text class="cjk" x="290.0 309.2" y="425.5" fill="#dcdcdc">安値</text><text transform="translate(328.4,425.9) scale(0.710,1)" x="3.76 16.69 30.21 43.73 57.84" y="0" font-family="Liberation Sans" font-size="21.6" font-weight="normal" fill="#dcdcdc" xml:space="preserve">:--- </text><text class="cjk" x="376.4 395.6" y="425.5" fill="#dcdcdc">終値</text><text transform="translate(414.8,425.9) scale(0.710,1)" x="3.76 16.69 30.21 43.73" y="0" font-family="Liberation Sans" font-size="21.6" font-weight="normal" fill="#dcdcdc" xml:space="preserve">:---</text><text transform="translate(1932.4,453.4) scale(0.710,1)" x="0.75 17.28 27.80 41.32 54.84" y="0" font-family="Liberation Sans" font-size="21.6" font-weight="normal" fill="#e2e2e2" xml:space="preserve">3,950</text><text transform="translate(1932.4,533.3) scale(0.710,1)" x="0.75 17.28 27.80 41.32 54.84" y="0" font-family="Liberation Sans" font-size="21.6" font-weight="normal" fill="#e2e2e2" xml:space="preserve">3,925</text><text transform="translate(1932.4,614.2) scale(0.710,1)" x="0.75 17.28 27.80 41.32 54.84" y="0" font-family="Liberation Sans" font-size="21.6" font-weight="normal" fill="#e2e2e2" xml:space="preserve">3,900</text><text transform="translate(1932.4,694.1) scale(0.710,1)" x="0.75 17.28 27.80 41.32 54.84" y="0" font-family="Liberation Sans" font-size="21.6" font-weight="normal" fill="#e2e2e2" xml:space="preserve">3,875</text><text transform="translate(1932.4,775.2) scale(0.710,1)" x="0.75 17.28 27.80 41.32 54.84" y="0" font-family="Liberation Sans" font-size="21.6" font-weight="normal" fill="#e2e2e2" xml:space="preserve">3,850</text><rect x="1931.2" y="456.6" width="93.0" height="32.6" fill="#d2d2d2"/><text transform="translate(1953.0,477.4) scale(0.720,1)" x="0.80 17.42 28.02 41.63 55.24" y="0" font-family="Liberation Sans" font-size="21.6" font-weight="bold" fill="#000" xml:space="preserve">3,945</text><text transform="translate(84.3,814.2) scale(0.710,1)" x="0.75 14.28" y="0" font-family="Liberation Sans" font-size="21.6" font-weight="normal" fill="#e2e2e2" xml:space="preserve">05</text><text transform="translate(171.9,814.2) scale(0.710,1)" x="0.75 14.28" y="0" font-family="Liberation Sans" font-size="21.6" font-weight="normal" fill="#e2e2e2" xml:space="preserve">09</text><text transform="translate(268.2,814.2) scale(0.710,1)" x="0.75 14.28" y="0" font-family="Liberation Sans" font-size="21.6" font-weight="normal" fill="#e2e2e2" xml:space="preserve">10</text><text transform="translate(364.5,814.2) scale(0.710,1)" x="0.75 14.28" y="0" font-family="Liberation Sans" font-size="21.6" font-weight="normal" fill="#e2e2e2" xml:space="preserve">11</text><text transform="translate(460.9,814.2) scale(0.710,1)" x="0.75 14.28" y="0" font-family="Liberation Sans" font-size="21.6" font-weight="normal" fill="#e2e2e2" xml:space="preserve">12</text><text transform="translate(556.5,814.2) scale(0.710,1)" x="0.75 14.28" y="0" font-family="Liberation Sans" font-size="21.6" font-weight="normal" fill="#e2e2e2" xml:space="preserve">13</text><text transform="translate(648.6,814.2) scale(0.710,1)" x="0.75 14.28" y="0" font-family="Liberation Sans" font-size="21.6" font-weight="normal" fill="#e2e2e2" xml:space="preserve">14</text><text transform="translate(760.4,814.2) scale(0.710,1)" x="0.75 14.28" y="0" font-family="Liberation Sans" font-size="21.6" font-weight="normal" fill="#e2e2e2" xml:space="preserve">16</text><text transform="translate(808.9,814.2) scale(0.710,1)" x="0.75 14.28" y="0" font-family="Liberation Sans" font-size="21.6" font-weight="normal" fill="#e2e2e2" xml:space="preserve">17</text><text transform="translate(904.5,814.2) scale(0.710,1)" x="0.75 14.28" y="0" font-family="Liberation Sans" font-size="21.6" font-weight="normal" fill="#e2e2e2" xml:space="preserve">18</text><text transform="translate(999.9,814.2) scale(0.710,1)" x="0.75 14.28" y="0" font-family="Liberation Sans" font-size="21.6" font-weight="normal" fill="#e2e2e2" xml:space="preserve">19</text><text transform="translate(1096.2,814.2) scale(0.710,1)" x="0.75 14.28" y="0" font-family="Liberation Sans" font-size="21.6" font-weight="normal" fill="#e2e2e2" xml:space="preserve">20</text><text transform="translate(1191.8,814.2) scale(0.710,1)" x="0.75 14.28" y="0" font-family="Liberation Sans" font-size="21.6" font-weight="normal" fill="#e2e2e2" xml:space="preserve">21</text><text transform="translate(1288.6,814.2) scale(0.710,1)" x="0.75 14.28" y="0" font-family="Liberation Sans" font-size="21.6" font-weight="normal" fill="#e2e2e2" xml:space="preserve">22</text><text transform="translate(1383.7,814.2) scale(0.710,1)" x="0.75 14.28" y="0" font-family="Liberation Sans" font-size="21.6" font-weight="normal" fill="#e2e2e2" xml:space="preserve">23</text><text transform="translate(1480.0,814.2) scale(0.710,1)" x="0.75 14.28" y="0" font-family="Liberation Sans" font-size="21.6" font-weight="normal" fill="#e2e2e2" xml:space="preserve">00</text><text transform="translate(1574.6,814.2) scale(0.710,1)" x="0.75 14.28" y="0" font-family="Liberation Sans" font-size="21.6" font-weight="normal" fill="#e2e2e2" xml:space="preserve">01</text><text transform="translate(1660.6,814.2) scale(0.710,1)" x="0.75 14.28" y="0" font-family="Liberation Sans" font-size="21.6" font-weight="normal" fill="#e2e2e2" xml:space="preserve">02</text><text transform="translate(1739.9,814.2) scale(0.710,1)" x="0.75 14.28" y="0" font-family="Liberation Sans" font-size="21.6" font-weight="normal" fill="#e2e2e2" xml:space="preserve">03</text><text transform="translate(1812.1,814.2) scale(0.710,1)" x="0.75 14.28" y="0" font-family="Liberation Sans" font-size="21.6" font-weight="normal" fill="#e2e2e2" xml:space="preserve">04</text><text transform="translate(1874.6,814.2) scale(0.710,1)" x="0.75 14.28" y="0" font-family="Liberation Sans" font-size="21.6" font-weight="normal" fill="#e2e2e2" xml:space="preserve">05</text><text transform="translate(122.4,814.2) scale(0.710,1)" x="0.75 14.28" y="0" font-family="Liberation Sans" font-size="21.6" font-weight="bold" fill="#fff" xml:space="preserve">06</text><text transform="translate(718.0,814.2) scale(0.710,1)" x="0.75 14.28" y="0" font-family="Liberation Sans" font-size="21.6" font-weight="normal" fill="#e2e2e2" xml:space="preserve">15</text><text transform="translate(1896.0,814.2) scale(0.710,1)" x="0.75 14.28" y="0" font-family="Liberation Sans" font-size="21.6" font-weight="normal" fill="#e2e2e2" xml:space="preserve">06</text><text transform="translate(1480.0,789.6) scale(0.710,1)" x="0.75 14.28" y="0" font-family="Liberation Sans" font-size="21.6" font-weight="normal" fill="#e2e2e2" xml:space="preserve">14</text><text transform="translate(11.6,852.8) scale(0.710,1)" x="3.76" y="0" font-family="Liberation Sans" font-size="21.6" font-weight="normal" fill="#dcdcdc" xml:space="preserve">[</text><text class="cjk" x="21.2" y="852.4" fill="#dcdcdc">金</text><text transform="translate(40.4,852.8) scale(0.710,1)" x="3.76 14.28 27.80 44.32 54.84 68.36 84.89 95.40 111.93 122.44 135.97 149.49" y="0" font-family="Liberation Sans" font-size="21.6" font-weight="normal" fill="#dcdcdc" xml:space="preserve"> 23/02 7,973</text><text class="cjk" x="165.2" y="852.4" text-anchor="middle" fill="#dcdcdc">×</text><text transform="translate(174.8,852.8) scale(0.710,1)" x="0.75 17.28 27.80 41.32 57.84" y="0" font-family="Liberation Sans" font-size="21.6" font-weight="normal" fill="#dcdcdc" xml:space="preserve">1.00]</text><text class="cjk" x="222.8" y="852.4" fill="#dcdcdc">－</text><text transform="translate(242.0,852.8) scale(0.710,1)" x="3.76" y="0" font-family="Liberation Sans" font-size="21.6" font-weight="normal" fill="#dcdcdc" xml:space="preserve">[</text><text class="cjk" x="251.6 270.8" y="852.4" fill="#dcdcdc">白金</text><text transform="translate(290.0,852.8) scale(0.710,1)" x="3.76 14.28 27.80 44.32 54.84 68.36 84.89 95.40 111.93 122.44 135.97 149.49" y="0" font-family="Liberation Sans" font-size="21.6" font-weight="normal" fill="#dcdcdc" xml:space="preserve"> 23/02 3,945</text><text class="cjk" x="414.8" y="852.4" text-anchor="middle" fill="#dcdcdc">×</text><text transform="translate(424.4,852.8) scale(0.710,1)" x="0.75 17.28 27.80 41.32 57.84 71.37" y="0" font-family="Liberation Sans" font-size="21.6" font-weight="normal" fill="#dcdcdc" xml:space="preserve">1.00] </text><text class="cjk" x="482.0 501.2" y="852.4" fill="#dcdcdc">終値</text><text transform="translate(520.4,852.8) scale(0.710,1)" x="3.76" y="0" font-family="Liberation Sans" font-size="21.6" font-weight="normal" fill="#dcdcdc" xml:space="preserve"> </text><text class="cjk" x="530.0 549.2" y="852.4" fill="#dcdcdc">時刻</text><text transform="translate(568.4,852.8) scale(0.710,1)" x="3.76 14.28 27.80 44.32 54.84 68.36 84.89 95.40 111.93 122.44 135.97 149.49" y="0" font-family="Liberation Sans" font-size="21.6" font-weight="normal" fill="#dcdcdc" xml:space="preserve">:06:00 4,028</text><text transform="translate(1932.4,876.9) scale(0.710,1)" x="0.75 17.28 27.80 41.32 54.84" y="0" font-family="Liberation Sans" font-size="21.6" font-weight="normal" fill="#e2e2e2" xml:space="preserve">4,075</text><text transform="translate(1932.4,956.6) scale(0.710,1)" x="0.75 17.28 27.80 41.32 54.84" y="0" font-family="Liberation Sans" font-size="21.6" font-weight="normal" fill="#e2e2e2" xml:space="preserve">4,050</text><rect x="1931.2" y="1014.0" width="93.0" height="33.3" fill="#d2d2d2"/><text transform="translate(1953.0,1034.8) scale(0.720,1)" x="0.80 17.42 28.02 41.63 55.24" y="0" font-family="Liberation Sans" font-size="21.6" font-weight="bold" fill="#000" xml:space="preserve">4,028</text><text transform="translate(84.3,1065.6) scale(0.710,1)" x="0.75 14.28" y="0" font-family="Liberation Sans" font-size="21.6" font-weight="normal" fill="#e2e2e2" xml:space="preserve">05</text><text transform="translate(171.9,1065.6) scale(0.710,1)" x="0.75 14.28" y="0" font-family="Liberation Sans" font-size="21.6" font-weight="normal" fill="#e2e2e2" xml:space="preserve">09</text><text transform="translate(268.2,1065.6) scale(0.710,1)" x="0.75 14.28" y="0" font-family="Liberation Sans" font-size="21.6" font-weight="normal" fill="#e2e2e2" xml:space="preserve">10</text><text transform="translate(364.5,1065.6) scale(0.710,1)" x="0.75 14.28" y="0" font-family="Liberation Sans" font-size="21.6" font-weight="normal" fill="#e2e2e2" xml:space="preserve">11</text><text transform="translate(460.9,1065.6) scale(0.710,1)" x="0.75 14.28" y="0" font-family="Liberation Sans" font-size="21.6" font-weight="normal" fill="#e2e2e2" xml:space="preserve">12</text><text transform="translate(556.5,1065.6) scale(0.710,1)" x="0.75 14.28" y="0" font-family="Liberation Sans" font-size="21.6" font-weight="normal" fill="#e2e2e2" xml:space="preserve">13</text><text transform="translate(648.6,1065.6) scale(0.710,1)" x="0.75 14.28" y="0" font-family="Liberation Sans" font-size="21.6" font-weight="normal" fill="#e2e2e2" xml:space="preserve">14</text><text transform="translate(760.4,1065.6) scale(0.710,1)" x="0.75 14.28" y="0" font-family="Liberation Sans" font-size="21.6" font-weight="normal" fill="#e2e2e2" xml:space="preserve">16</text><text transform="translate(808.9,1065.6) scale(0.710,1)" x="0.75 14.28" y="0" font-family="Liberation Sans" font-size="21.6" font-weight="normal" fill="#e2e2e2" xml:space="preserve">17</text><text transform="translate(904.5,1065.6) scale(0.710,1)" x="0.75 14.28" y="0" font-family="Liberation Sans" font-size="21.6" font-weight="normal" fill="#e2e2e2" xml:space="preserve">18</text><text transform="translate(999.9,1065.6) scale(0.710,1)" x="0.75 14.28" y="0" font-family="Liberation Sans" font-size="21.6" font-weight="normal" fill="#e2e2e2" xml:space="preserve">19</text><text transform="translate(1096.2,1065.6) scale(0.710,1)" x="0.75 14.28" y="0" font-family="Liberation Sans" font-size="21.6" font-weight="normal" fill="#e2e2e2" xml:space="preserve">20</text><text transform="translate(1191.8,1065.6) scale(0.710,1)" x="0.75 14.28" y="0" font-family="Liberation Sans" font-size="21.6" font-weight="normal" fill="#e2e2e2" xml:space="preserve">21</text><text transform="translate(1288.6,1065.6) scale(0.710,1)" x="0.75 14.28" y="0" font-family="Liberation Sans" font-size="21.6" font-weight="normal" fill="#e2e2e2" xml:space="preserve">22</text><text transform="translate(1383.7,1065.6) scale(0.710,1)" x="0.75 14.28" y="0" font-family="Liberation Sans" font-size="21.6" font-weight="normal" fill="#e2e2e2" xml:space="preserve">23</text><text transform="translate(1480.0,1065.6) scale(0.710,1)" x="0.75 14.28" y="0" font-family="Liberation Sans" font-size="21.6" font-weight="normal" fill="#e2e2e2" xml:space="preserve">00</text><text transform="translate(1574.6,1065.6) scale(0.710,1)" x="0.75 14.28" y="0" font-family="Liberation Sans" font-size="21.6" font-weight="normal" fill="#e2e2e2" xml:space="preserve">01</text><text transform="translate(1660.6,1065.6) scale(0.710,1)" x="0.75 14.28" y="0" font-family="Liberation Sans" font-size="21.6" font-weight="normal" fill="#e2e2e2" xml:space="preserve">02</text><text transform="translate(1739.9,1065.6) scale(0.710,1)" x="0.75 14.28" y="0" font-family="Liberation Sans" font-size="21.6" font-weight="normal" fill="#e2e2e2" xml:space="preserve">03</text><text transform="translate(1812.1,1065.6) scale(0.710,1)" x="0.75 14.28" y="0" font-family="Liberation Sans" font-size="21.6" font-weight="normal" fill="#e2e2e2" xml:space="preserve">04</text><text transform="translate(1874.6,1065.6) scale(0.710,1)" x="0.75 14.28" y="0" font-family="Liberation Sans" font-size="21.6" font-weight="normal" fill="#e2e2e2" xml:space="preserve">05</text><text transform="translate(122.4,1065.6) scale(0.710,1)" x="0.75 14.28" y="0" font-family="Liberation Sans" font-size="21.6" font-weight="bold" fill="#fff" xml:space="preserve">06</text><text transform="translate(718.0,1065.6) scale(0.710,1)" x="0.75 14.28" y="0" font-family="Liberation Sans" font-size="21.6" font-weight="normal" fill="#e2e2e2" xml:space="preserve">15</text><text transform="translate(1896.0,1065.6) scale(0.710,1)" x="0.75 14.28" y="0" font-family="Liberation Sans" font-size="21.6" font-weight="normal" fill="#e2e2e2" xml:space="preserve">06</text><text transform="translate(1480.0,1041.0) scale(0.710,1)" x="0.75 14.28" y="0" font-family="Liberation Sans" font-size="21.6" font-weight="normal" fill="#e2e2e2" xml:space="preserve">14</text></g>
<g id="chrome"><g><rect x="16.5" y="12.5" width="20.5" height="20.5" fill="#fbfbfb"/><path d="M17 16.2H37M17 19.4H37M17 22.6H37M17 25.8H37M17 29H37" stroke="#d8d8d8" stroke-width="1"/><path d="M16.3 12.2V33.2H37.2" stroke="#8a8a8a" stroke-width="1.6" fill="none"/><path d="M21.3 21V31.5M28.6 13.5V26M33.8 15V27.5" stroke="#ff0a14" stroke-width="3.2" fill="none"/><path d="M24.6 15.5V28.5M31 16.5V25.5" stroke="#0a80e6" stroke-width="2.8" fill="none"/></g><text class="cjk" x="46.6" y="29.2" fill="#000">金</text><text x="67.0" y="29.8" font-family="Liberation Sans" font-size="21.5" font-weight="normal" fill="#000" textLength="7.6" lengthAdjust="spacingAndGlyphs" xml:space="preserve">1</text><text class="cjk" x="75.0 93.8" y="29.2" fill="#000">分足</text><text x="113.2" y="29.8" font-family="Liberation Sans" font-size="21.5" font-weight="normal" fill="#000" textLength="108.0" lengthAdjust="spacingAndGlyphs" xml:space="preserve">[2023/02]1.00</text><text x="226.8" y="29.8" font-family="Liberation Sans" font-size="21.5" font-weight="normal" fill="#000" textLength="7.4" lengthAdjust="spacingAndGlyphs" xml:space="preserve">-</text><text class="cjk" x="243.6 262.2" y="29.2" fill="#000">白金</text><text x="282.6" y="29.8" font-family="Liberation Sans" font-size="21.5" font-weight="normal" fill="#000" textLength="7.6" lengthAdjust="spacingAndGlyphs" xml:space="preserve">1</text><text class="cjk" x="290.6 309.4" y="29.2" fill="#000">分足</text><text x="328.8" y="29.8" font-family="Liberation Sans" font-size="21.5" font-weight="normal" fill="#000" textLength="108.0" lengthAdjust="spacingAndGlyphs" xml:space="preserve">[2023/02]1.00</text><rect x="1935.8" y="9.2" width="26.8" height="27.2" rx="4.5" fill="url(#bg)" stroke="#9a9a9a" stroke-width="1.4"/><rect x="1967.0" y="9.2" width="26.8" height="27.2" rx="4.5" fill="url(#bg)" stroke="#9a9a9a" stroke-width="1.4"/><rect x="1998.4" y="9.2" width="27.0" height="27.2" rx="4.5" fill="url(#bg)" stroke="#9a9a9a" stroke-width="1.4"/><path d="M1943 27.6H1952.6" stroke="#555" stroke-width="2.6"/><rect x="1975" y="17.6" width="11.6" height="10.6" fill="#e6e6e6" stroke="#555" stroke-width="1.8"/><path d="M1974.2 18.4H1987.4" stroke="#555" stroke-width="3"/><path d="M2006 17.2L2017.6 28.4M2017.6 17.2L2006 28.4" stroke="#555" stroke-width="2.2"/><rect x="1901.6" y="13" width="16" height="20" fill="#f4f4f4" stroke="#7c7c7c" stroke-width="1.5"/><rect x="1908" y="18.2" width="14.4" height="10.4" fill="#f0f0f0" stroke="#666" stroke-width="1.8"/><path d="M1908 21.8H1922M1908 25.2H1922M1912.8 19V28M1917.6 19V28" stroke="#9a9a9a" stroke-width="1"/><path d="M1901.6 13.2H1918" stroke="#777" stroke-width="2.2"/><text class="cjk" x="17.2" y="66.0" fill="#1b1b1b">金</text><text x="52.6" y="66.2" font-family="Liberation Sans" font-size="19.6" font-weight="normal" fill="#1b1b1b" textLength="65.2" lengthAdjust="spacingAndGlyphs" xml:space="preserve">2023/02</text><rect x="128.0" y="43.6" width="75.0" height="28.4" fill="#fff" stroke="#c4c8ce" stroke-width="1.2"/><text x="131.2" y="62.2" font-family="Liberation Sans" font-size="19.6" font-weight="normal" fill="#000" textLength="29.3" lengthAdjust="spacingAndGlyphs" xml:space="preserve">1.00</text><rect x="179.8" y="46.8" width="20.2" height="10.2" fill="#eef0f2" stroke="#b4b4b4" stroke-width="1"/><rect x="179.8" y="57.4" width="20.2" height="10.2" fill="#e4e6e8" stroke="#b4b4b4" stroke-width="1"/><path d="M185.3 54.6L189.9 49.4L194.5 54.6Z" fill="#000"/><path d="M185.3 60.2L189.9 65.4L194.5 60.2Z" fill="#000"/><path d="M211.3 50.8V69.6" stroke="#f4f4f6" stroke-width="1.8"/><path d="M210.0 50.8V69.6" stroke="#b8bcc4" stroke-width="1"/><text class="cjk" x="222.2 240.6" y="66.0" fill="#1b1b1b">白金</text><text x="275.8" y="66.2" font-family="Liberation Sans" font-size="19.6" font-weight="normal" fill="#1b1b1b" textLength="65.2" lengthAdjust="spacingAndGlyphs" xml:space="preserve">2023/02</text><rect x="351.2" y="43.6" width="75.4" height="28.4" fill="#fff" stroke="#c4c8ce" stroke-width="1.2"/><text x="354.2" y="62.2" font-family="Liberation Sans" font-size="19.6" font-weight="normal" fill="#000" textLength="29.6" lengthAdjust="spacingAndGlyphs" xml:space="preserve">1.00</text><rect x="403.4" y="46.8" width="20.2" height="10.2" fill="#eef0f2" stroke="#b4b4b4" stroke-width="1"/><rect x="403.4" y="57.4" width="20.2" height="10.2" fill="#e4e6e8" stroke="#b4b4b4" stroke-width="1"/><path d="M408.9 54.6L413.5 49.4L418.1 54.6Z" fill="#000"/><path d="M408.9 60.2L413.5 65.4L418.1 60.2Z" fill="#000"/><path d="M434.5 50.8V69.6" stroke="#f4f4f6" stroke-width="1.8"/><path d="M433.2 50.8V69.6" stroke="#b8bcc4" stroke-width="1"/><text class="cjk" x="444.6 463.2" y="66.0" fill="#1b1b1b">分足</text><path d="M491.4 55.6H500.6L496.0 60.8Z" fill="#000"/><rect x="507.2" y="43.6" width="70.8" height="28.4" fill="#fff" stroke="#c4c8ce" stroke-width="1.2"/><text x="510.6" y="62.2" font-family="Liberation Sans" font-size="19.6" font-weight="normal" fill="#000" textLength="35.9" lengthAdjust="spacingAndGlyphs" xml:space="preserve">1200</text><rect x="554.8" y="46.8" width="20.2" height="10.2" fill="#eef0f2" stroke="#b4b4b4" stroke-width="1"/><rect x="554.8" y="57.4" width="20.2" height="10.2" fill="#e4e6e8" stroke="#b4b4b4" stroke-width="1"/><path d="M560.3 54.6L564.9 49.4L569.5 54.6Z" fill="#000"/><path d="M560.3 60.2L564.9 65.4L569.5 60.2Z" fill="#000"/><text x="587.6" y="66.2" font-family="Liberation Sans" font-size="19.6" font-weight="normal" fill="#1b1b1b" textLength="8.6" lengthAdjust="spacingAndGlyphs" xml:space="preserve">1</text><text class="cjk" x="596.4 615.0" y="66.0" fill="#1b1b1b">分足</text><path d="M642.8 55.6H652.0L647.4 60.8Z" fill="#000"/><path d="M664.4 50.8V69.6" stroke="#f4f4f6" stroke-width="1.8"/><path d="M663.1 50.8V69.6" stroke="#b8bcc4" stroke-width="1"/><rect x="669.4" y="44" width="26.4" height="26.8" fill="#fdfdfd"/><path d="M672 48.4H695M672 51.4H695M672 54.6H695M672 57.8H695M672 61H695M672 64.2H695M672 67.2H695" stroke="#d6d6d6" stroke-width="1"/><path d="M669.6 71V44H696" stroke="#7e7e7e" stroke-width="1.8" fill="none"/><path d="M669.6 71.2H696.4V44" stroke="#fff" stroke-width="1.6" fill="none"/><path d="M677.2 46.4V68.6M672.4 53.4H693.6" stroke="#4040b8" stroke-width="1.8"/><path d="M681 57.6H689.6L687 60.2L691 64.2L688.4 66.8L684.2 62.8L681 65.6Z" fill="#9a14b4"/><path d="M709.6 50.8V69.6" stroke="#f4f4f6" stroke-width="1.8"/><path d="M708.3 50.8V69.6" stroke="#b8bcc4" stroke-width="1"/><rect x="714.6" y="44" width="26.4" height="26.8" fill="#b4b8bc"/><path d="M714.8 71V44H741.2" stroke="#7e7e7e" stroke-width="1.8" fill="none"/><path d="M714.8 71.2H741.6V44" stroke="#fff" stroke-width="1.6" fill="none"/><path d="M719.6 50L734 55.2L729.4 58.2L735.2 64.6L732.4 67.4L726.4 61L723.2 65.6Z" fill="#fff" stroke="#6a4ad0" stroke-width="2" stroke-linejoin="round"/><path d="M758 68.2L755.6 63L751.6 58.8Q751.4 56.4 753.6 56.4L757 58.6L754.6 51.6Q755 49 757.2 49.4L760.4 55L761 48.6Q762.6 46 764.6 47.6L765.2 54.6L766.4 50Q768 48 769.6 49.6L769.4 56L770.4 54Q771.8 53 772.2 55L771.8 60Q771.6 64 768.6 68.2Z" fill="#fff6e4" stroke="#d98c1c" stroke-width="1.9" stroke-linejoin="round"/><path d="M804.9 46.9Q808.2 45.4 809.2 48.6L808.3 51.1L793.3 63.6L787.8 67.4L789.9 59.4Z" fill="#f8c870" stroke="#e09a28" stroke-width="1.8" stroke-linejoin="round"/><path d="M805.6 49.4L793.0 60" stroke="#fff4e0" stroke-width="2.6" stroke-linecap="round"/><path d="M787.6 67.6L790.2 64.2" stroke="#a8681c" stroke-width="2.4" stroke-linecap="round"/><path d="M840.7 46.9Q844.0 45.4 845.0 48.6L844.1 51.1L829.1 63.6L823.6 67.4L825.7 59.4Z" fill="#7eb0f8" stroke="#2a6ae0" stroke-width="1.8" stroke-linejoin="round"/><path d="M841.4 49.4L828.8 60" stroke="#eaf2ff" stroke-width="2.6" stroke-linecap="round"/><path d="M823.4 67.6L826.0 64.2" stroke="#1a4ab0" stroke-width="2.4" stroke-linecap="round"/><path d="M839.8 57.2L845.4 62.8L839.8 68.4L834.2 62.8Z" fill="#14287a"/><path d="M838.4 60.2v1.6M841.4 60.2v1.6M838.4 63.8v1.6M841.4 63.8v1.6" stroke="#b8c8f0" stroke-width="1.2"/><path d="M862.8 50.8V69.6" stroke="#f4f4f6" stroke-width="1.8"/><path d="M861.5 50.8V69.6" stroke="#b8bcc4" stroke-width="1"/><rect x="870.4" y="47.6" width="20.6" height="19.8" fill="#fafafa"/><path d="M871.0 50.6h20M871.0 53.8h20M871.0 57h20M871.0 60.2h20M871.0 63.4h20" stroke="#dcdcdc" stroke-width="1"/><path d="M870.8 47.4V67.4H891.6" stroke="#8c8c8c" stroke-width="1.4" fill="none"/><path d="M874.6 67V58.6M879.6 67V50M884.6 67V53.2M889.4 67V59.6" stroke="#1e8cff" stroke-width="3"/><path d="M896.0 55.6H905.2L900.6 60.8Z" fill="#000"/><rect x="914.2" y="47.6" width="20.6" height="19.8" fill="#fafafa"/><path d="M914.8 50.6h20M914.8 53.8h20M914.8 57h20M914.8 60.2h20M914.8 63.4h20" stroke="#dcdcdc" stroke-width="1"/><path d="M914.6 47.4V67.4H935.4" stroke="#8c8c8c" stroke-width="1.4" fill="none"/><path d="M918.4 67V58.6M923.4 67V50M928.4 67V53.2M933.2 67V59.6" stroke="#1e8cff" stroke-width="3"/><path d="M917.2 50.4L932.6 64.6M932.6 50.4L917.2 64.6" stroke="#ff2a2a" stroke-width="2.4"/><path d="M953.0 50.8V69.6" stroke="#f4f4f6" stroke-width="1.8"/><path d="M951.7 50.8V69.6" stroke="#b8bcc4" stroke-width="1"/><path d="M970.9 50.6A8.2 8.2 0 1 0 972.9 65.4" fill="none" stroke="#1c8ae6" stroke-width="3.2"/><path d="M961.2 46.2H970.6V55.6L967.4 52.2L964.6 49.4Z" fill="#1a5af0"/><path d="M969.4 66.8A8.2 8.2 0 0 0 974.6 64.2" fill="none" stroke="#9cd0f4" stroke-width="2.6"/><text x="971.8" y="61.6" font-family="Liberation Sans" font-size="13.4" font-weight="bold" fill="#1a6ae0" textLength="9.0" lengthAdjust="spacingAndGlyphs" xml:space="preserve">R</text><g transform="translate(2000.8,57.4) rotate(-45) scale(0.9)"><path d="M-14.6 -2.4H1.6C2.4 -5.4 5 -7.2 8.4 -6.8L4.6 -2.4L5.4 1.4L9 2.4L12.6 -1.6C13.2 2 10.6 5.4 7 5.6C4.6 5.8 2.6 4.6 1.6 2.6H-14.6Q-16.4 0.1 -14.6 -2.4Z" fill="#c8c8ff" stroke="#5a5af0" stroke-width="1.6" stroke-linejoin="round"/><path d="M-14 0.2H-3" stroke="#3030ff" stroke-width="3.4"/></g></g>
</svg>
</body></html>
